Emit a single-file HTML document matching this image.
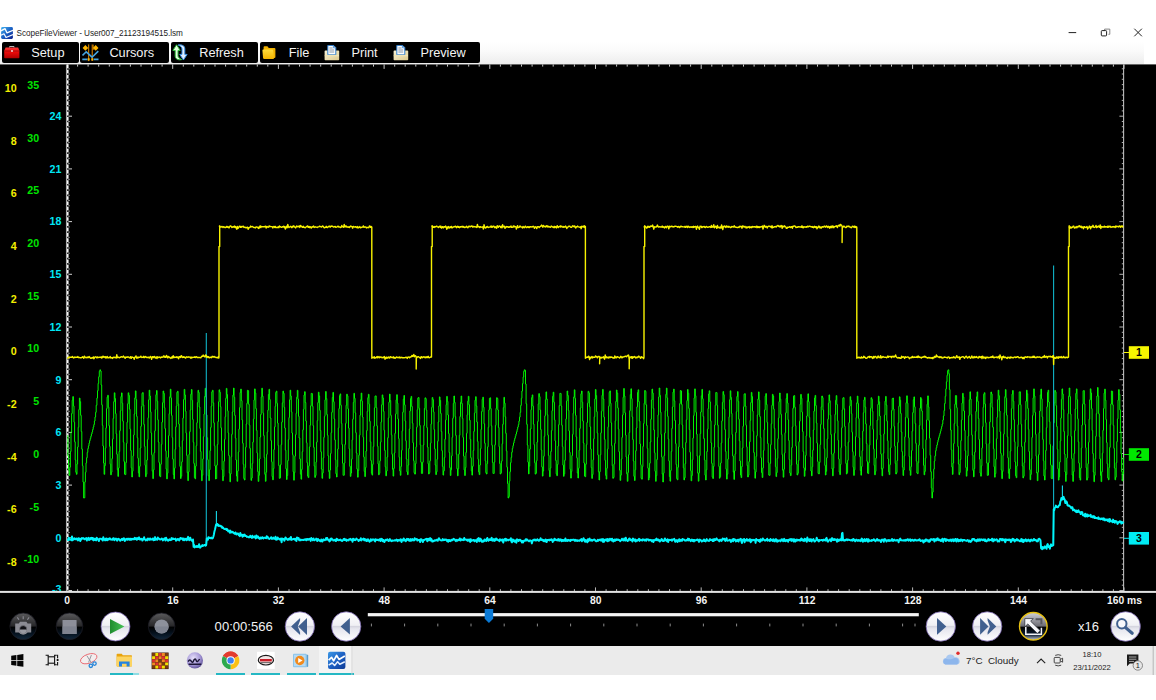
<!DOCTYPE html>
<html lang="en"><head><meta charset="utf-8"><title>ScopeFileViewer - User007_21123194515.lsm</title>
<style>
html,body{margin:0;padding:0;background:#fff;}
body{width:1156px;height:700px;overflow:hidden;font-family:"Liberation Sans",Arial,sans-serif;}
#root{position:relative;width:1156px;height:700px;overflow:hidden;background:#fff;}
#root *{box-sizing:border-box;}
.titlebar{position:absolute;left:0;top:26px;width:1156px;height:15px;background:#fff;}
.titlebar svg.app{position:absolute;left:1.1px;top:.9px;}
.title{position:absolute;left:16.6px;top:2.2px;font-size:8.2px;line-height:11px;color:#1c1c1c;white-space:nowrap;letter-spacing:-0.06px;}
.winctl{position:absolute;right:0;top:0;}
.toolbar{position:absolute;left:0;top:41px;width:1143.5px;height:23.4px;background:linear-gradient(#ffffff 0%,#fbfbfb 40%,#ededed 100%);}
.tb{position:absolute;top:.5px;height:21.6px;background:#000;border-radius:2px;color:#f4f4f4;font-size:12.75px;}
.tb span{position:absolute;top:3.1px;line-height:15px;white-space:nowrap;}
.tb svg{position:absolute;}
svg.plot{position:absolute;left:0;top:64px;}
.ctl{position:absolute;}
.timecode{position:absolute;left:214.6px;top:618.6px;font-size:13.1px;line-height:16px;color:#f2f2f2;white-space:nowrap;}
.zoomtxt{position:absolute;left:1078px;top:618.5px;font-size:13px;line-height:16px;color:#f2f2f2;white-space:nowrap;}
.taskbar{position:absolute;left:0;top:646px;width:1156px;height:29px;background:#ebebeb;}
.taskbar svg{position:absolute;}
.tk-ul{position:absolute;top:27.4px;height:1.6px;background:#25b8c4;}
.tk-act{position:absolute;left:319.4px;top:0;width:32.6px;height:29px;background:#f4f4f4;}
.wx{position:absolute;left:966px;top:8.6px;font-size:9.85px;line-height:12px;color:#222;white-space:nowrap;}
.clock{position:absolute;left:1066px;top:2.6px;width:52px;text-align:center;font-size:7.6px;line-height:12.9px;color:#222;white-space:nowrap;}

</style></head><body>
<div id="root">
<div class="titlebar"><svg class="app" width="12" height="12" viewBox="0 0 12 12"><defs><linearGradient id="ga" x1="0" y1="0" x2="1" y2="1"><stop offset="0" stop-color="#46b4f2"/><stop offset=".5" stop-color="#1c62c4"/><stop offset="1" stop-color="#0a1c8c"/></linearGradient></defs><rect x=".1" y=".1" width="11.800" height="11.800" rx="1.300" fill="url(#ga)"/><path d="M0 3.800 4.100 1.700 5.900 5.800 12 3.400" fill="none" stroke="#fff" stroke-width="1.300" stroke-linejoin="round"/><path d="M0 8.200 3 6.800 5 10.500 12 7.600" fill="none" stroke="#f4f8ff" stroke-width="1.250" stroke-linejoin="round"/></svg><span class="title">ScopeFileViewer - User007_21123194515.lsm</span><svg class="winctl" width="110" height="15" viewBox="1046 26 110 15"><path d="M1068.6 32.6h7.6" stroke="#222" stroke-width="1" fill="none"/><path d="M1103 30.6h1.6v-1.5h5.2v5.2h-1.4" stroke="#777" stroke-width=".9" fill="none"/><rect x="1101.3" y="30.6" width="5.3" height="5.3" rx=".8" fill="#fff" stroke="#222" stroke-width="1"/><path d="M1134.3 28.7l7.6 7.6m0-7.6l-7.6 7.6" stroke="#222" stroke-width="1" fill="none"/></svg></div>
<div class="toolbar">
<div class="tb" style="left:2px;width:76.6px"><svg style="left:2.4px;top:3.4px" width="16" height="14" viewBox="0 0 16 14"><defs><linearGradient id="gs" x1="0" y1="0" x2="0" y2="1"><stop offset="0" stop-color="#ff3a3a"/><stop offset=".45" stop-color="#e80a0a"/><stop offset="1" stop-color="#b00000"/></linearGradient></defs><path d="M5.6 2.6V1.5h4.4v1.1" fill="none" stroke="#b9b9b9" stroke-width="1"/><path d="M1.6 2.6h12.6l1.2 3.2v6.6q0 .8-.8.8H1q-.8 0-.8-.8V5.8z" fill="url(#gs)"/><path d="M.3 6h15.2" stroke="#8e0000" stroke-width=".7"/><circle cx="8" cy="6" r=".9" fill="#f6e9e9"/></svg><span style="left:29.2px">Setup</span></div>
<div class="tb" style="left:80.2px;width:88.6px"><svg style="left:1.6px;top:2.2px" width="17" height="18" viewBox="0 0 17 18"><path d="M6.7 .4V17.1" stroke="#e89200" stroke-width="1"/><path d="M10.3 .4V17.1" stroke="#a86200" stroke-width="1.4"/><path d="M11.3 .6V6" stroke="#f0a000" stroke-width=".7"/><path d="M.5 11.5 4.2 7.8l5.900 5.400L16.300 7.100" fill="none" stroke="#45a5e0" stroke-width="1.600"/><path d="M.3 15.400h5.200M11.700 15.400h4.800" stroke="#45a5e0" stroke-width="1.700"/><path d="M3.400 1 6.200 3.900 3.400 6.800.6 3.900zM13.700 1l2.800 2.900-2.800 2.900-2.800-2.900z" fill="#fdb400"/><rect x="5.700" y="14.300" width="2" height="2.200" fill="#fdb400"/><rect x="9.300" y="14.300" width="2" height="2.200" fill="#fdb400"/></svg><span style="left:29.2px">Cursors</span></div>
<div class="tb" style="left:170.6px;width:87.4px"><svg style="left:1.4px;top:2.2px" width="16" height="17" viewBox="0 0 16 17"><path d="M9.8 15.6C5.6 16.4 3.2 14.8 3.2 12V6.4H.9L4.6.8l3.6 5.6H6v5.4c0 1.6 1.4 2.6 3.8 3.8z" fill="#e4ffe0" stroke="#2fc03a" stroke-width="1"/><path d="M6.2 1C10 .4 12.8 1.8 12.8 4.8v5.6h2.3l-3.7 5.6-3.6-5.6H10V5c0-1.600-1.200-2.800-3.800-4z" fill="#e2f0ff" stroke="#3a92e6" stroke-width="1"/></svg><span style="left:28.6px">Refresh</span></div>
<div class="tb" style="left:259.6px;width:220.6px"><svg style="left:2.6px;top:3px" width="15" height="15" viewBox="0 0 15 15"><defs><linearGradient id="gf" x1="0" y1="0" x2="0" y2="1"><stop offset="0" stop-color="#ffdc3c"/><stop offset="1" stop-color="#f4b400"/></linearGradient></defs><path d="M1.600 2.200q0-1 1-1h2.800l1.400 1.800h5.600q1 0 1 1V12q0 1-1 1H2.600q-1 0-1-1z" fill="#f2b200"/><path d="M.4 5.600q-.1-1 .9-1h8.800q1 0 1.100 1l.8 7.400q.1 1-.9 1H2.200q-1 0-1.100-1z" fill="url(#gf)"/></svg><span style="left:29.2px">File</span><svg style="left:64.8px;top:3px" width="16" height="16" viewBox="0 0 16 16"><defs><linearGradient id="gp64" x1="0" y1="0" x2="1" y2="1"><stop offset="0" stop-color="#fbf3d4"/><stop offset="1" stop-color="#dcc98e"/></linearGradient></defs><path d="M.6 6.200q0-.8.800-.8h13q.8 0 .8.800V14.400q0 .8-.8.800h-13q-.8 0-.8-.8z" fill="url(#gp64)"/><path d="M3.800 .4h5.800l2.200 2.200v7.200h-8z" fill="#fbfcfe" stroke="#2f7fd0" stroke-width="1"/><path d="M5.400 3h3.200M5.400 5h4.800M5.400 7h4.800" stroke="#8a98a8" stroke-width="1"/><path d="M9.400 .6v2.200h2.200" fill="none" stroke="#2f7fd0" stroke-width=".8"/><path d="M.8 10.600h14.200" stroke="#efe3b6" stroke-width="1.400"/></svg><span style="left:91.8px">Print</span><svg style="left:133.2px;top:3px" width="16" height="16" viewBox="0 0 16 16"><defs><linearGradient id="gp133" x1="0" y1="0" x2="1" y2="1"><stop offset="0" stop-color="#fbf3d4"/><stop offset="1" stop-color="#dcc98e"/></linearGradient></defs><path d="M.6 6.200q0-.8.800-.8h13q.8 0 .8.800V14.400q0 .8-.8.800h-13q-.8 0-.8-.8z" fill="url(#gp133)"/><path d="M3.800 .4h5.800l2.200 2.200v7.200h-8z" fill="#fbfcfe" stroke="#2f7fd0" stroke-width="1"/><path d="M5.400 3h3.200M5.400 5h4.800M5.400 7h4.800" stroke="#8a98a8" stroke-width="1"/><path d="M9.400 .6v2.200h2.200" fill="none" stroke="#2f7fd0" stroke-width=".8"/><path d="M.8 10.600h14.200" stroke="#efe3b6" stroke-width="1.400"/></svg><span style="left:160.8px">Preview</span></div>
</div>
<svg class="plot" width="1156" height="582" viewBox="0 64 1156 582">
<rect x="0" y="64.4" width="1156" height="582" fill="#000"/>
<path d="M67 64.4v4.5M77.6 64.4v2.2M88.1 64.4v2.2M98.7 64.4v2.2M109.3 64.4v2.2M119.8 64.4v2.2M130.4 64.4v2.2M141 64.4v2.2M151.6 64.4v2.2M162.1 64.4v2.2M172.7 64.4v4.5M183.3 64.4v2.2M193.8 64.4v2.2M204.4 64.4v2.2M215 64.4v2.2M225.6 64.4v2.2M236.1 64.4v2.2M246.7 64.4v2.2M257.3 64.4v2.2M267.8 64.4v2.2M278.4 64.4v4.5M289 64.4v2.2M299.5 64.4v2.2M310.1 64.4v2.2M320.7 64.4v2.2M331.2 64.4v2.2M341.8 64.4v2.2M352.4 64.4v2.2M363 64.4v2.2M373.5 64.4v2.2M384.1 64.4v4.5M394.7 64.4v2.2M405.2 64.4v2.2M415.8 64.4v2.2M426.4 64.4v2.2M436.9 64.4v2.2M447.5 64.4v2.2M458.1 64.4v2.2M468.7 64.4v2.2M479.2 64.4v2.2M489.8 64.4v4.5M500.4 64.4v2.2M510.9 64.4v2.2M521.5 64.4v2.2M532.1 64.4v2.2M542.7 64.4v2.2M553.2 64.4v2.2M563.8 64.4v2.2M574.4 64.4v2.2M584.9 64.4v2.2M595.5 64.4v4.5M606.1 64.4v2.2M616.6 64.4v2.2M627.2 64.4v2.2M637.8 64.4v2.2M648.4 64.4v2.2M658.9 64.4v2.2M669.5 64.4v2.2M680.1 64.4v2.2M690.6 64.4v2.2M701.2 64.4v4.5M711.8 64.4v2.2M722.3 64.4v2.2M732.9 64.4v2.2M743.5 64.4v2.2M754.1 64.4v2.2M764.6 64.4v2.2M775.2 64.4v2.2M785.8 64.4v2.2M796.3 64.4v2.2M806.9 64.4v4.5M817.5 64.4v2.2M828 64.4v2.2M838.6 64.4v2.2M849.2 64.4v2.2M859.8 64.4v2.2M870.3 64.4v2.2M880.9 64.4v2.2M891.5 64.4v2.2M902 64.4v2.2M912.6 64.4v4.5M923.2 64.4v2.2M933.7 64.4v2.2M944.3 64.4v2.2M954.9 64.4v2.2M965.5 64.4v2.2M976 64.4v2.2M986.6 64.4v2.2M997.2 64.4v2.2M1007.7 64.4v2.2M1018.3 64.4v4.5M1028.9 64.4v2.2M1039.4 64.4v2.2M1050 64.4v2.2M1060.6 64.4v2.2M1071.2 64.4v2.2M1081.7 64.4v2.2M1092.3 64.4v2.2M1102.9 64.4v2.2M1113.4 64.4v2.2M1124 64.4v4.5" stroke="#c8c8c8" stroke-width="1" fill="none"/>
<path d="M67 591v-3.6M77.6 591v-1.8M88.1 591v-1.8M98.7 591v-1.8M109.3 591v-1.8M119.8 591v-1.8M130.4 591v-1.8M141 591v-1.8M151.6 591v-1.8M162.1 591v-1.8M172.7 591v-3.6M183.3 591v-1.8M193.8 591v-1.8M204.4 591v-1.8M215 591v-1.8M225.6 591v-1.8M236.1 591v-1.8M246.7 591v-1.8M257.3 591v-1.8M267.8 591v-1.8M278.4 591v-3.6M289 591v-1.8M299.5 591v-1.8M310.1 591v-1.8M320.7 591v-1.8M331.2 591v-1.8M341.8 591v-1.8M352.4 591v-1.8M363 591v-1.8M373.5 591v-1.8M384.1 591v-3.6M394.7 591v-1.8M405.2 591v-1.8M415.8 591v-1.8M426.4 591v-1.8M436.9 591v-1.8M447.5 591v-1.8M458.1 591v-1.8M468.7 591v-1.8M479.2 591v-1.8M489.8 591v-3.6M500.4 591v-1.8M510.9 591v-1.8M521.5 591v-1.8M532.1 591v-1.8M542.7 591v-1.8M553.2 591v-1.8M563.8 591v-1.8M574.4 591v-1.8M584.9 591v-1.8M595.5 591v-3.6M606.1 591v-1.8M616.6 591v-1.8M627.2 591v-1.8M637.8 591v-1.8M648.4 591v-1.8M658.9 591v-1.8M669.5 591v-1.8M680.1 591v-1.8M690.6 591v-1.8M701.2 591v-3.6M711.8 591v-1.8M722.3 591v-1.8M732.9 591v-1.8M743.5 591v-1.8M754.1 591v-1.8M764.6 591v-1.8M775.2 591v-1.8M785.8 591v-1.8M796.3 591v-1.8M806.9 591v-3.6M817.5 591v-1.8M828 591v-1.8M838.6 591v-1.8M849.2 591v-1.8M859.8 591v-1.8M870.3 591v-1.8M880.9 591v-1.8M891.5 591v-1.8M902 591v-1.8M912.6 591v-3.6M923.2 591v-1.8M933.7 591v-1.8M944.3 591v-1.8M954.9 591v-1.8M965.5 591v-1.8M976 591v-1.8M986.6 591v-1.8M997.2 591v-1.8M1007.7 591v-1.8M1018.3 591v-3.6M1028.9 591v-1.8M1039.4 591v-1.8M1050 591v-1.8M1060.6 591v-1.8M1071.2 591v-1.8M1081.7 591v-1.8M1092.3 591v-1.8M1102.9 591v-1.8M1113.4 591v-1.8M1124 591v-3.6" stroke="#b4b4b4" stroke-width="1" fill="none"/>
<path d="M1123.4 68.8h-1.6M1123.4 74h-1.6M1123.4 79.3h-1.6M1123.4 84.6h-1.6M1123.4 89.8h-1.6M1123.4 95.1h-1.6M1123.4 100.4h-1.6M1123.4 105.7h-1.6M1123.4 110.9h-1.6M1123.4 116.2h-4M1123.4 121.5h-1.6M1123.4 126.7h-1.6M1123.4 132h-1.6M1123.4 137.3h-1.6M1123.4 142.5h-1.6M1123.4 147.8h-1.6M1123.4 153.1h-1.6M1123.4 158.4h-1.6M1123.4 163.6h-1.6M1123.4 168.9h-4M1123.4 174.2h-1.6M1123.4 179.4h-1.6M1123.4 184.7h-1.6M1123.4 190h-1.6M1123.4 195.3h-1.6M1123.4 200.5h-1.6M1123.4 205.8h-1.6M1123.4 211.1h-1.6M1123.4 216.3h-1.6M1123.4 221.6h-4M1123.4 226.9h-1.6M1123.4 232.1h-1.6M1123.4 237.4h-1.6M1123.4 242.7h-1.6M1123.4 248h-1.6M1123.4 253.2h-1.6M1123.4 258.5h-1.6M1123.4 263.8h-1.6M1123.4 269h-1.6M1123.4 274.3h-4M1123.4 279.6h-1.6M1123.4 284.8h-1.6M1123.4 290.1h-1.6M1123.4 295.4h-1.6M1123.4 300.7h-1.6M1123.4 305.9h-1.6M1123.4 311.2h-1.6M1123.4 316.5h-1.6M1123.4 321.7h-1.6M1123.4 327h-4M1123.4 332.3h-1.6M1123.4 337.5h-1.6M1123.4 342.8h-1.6M1123.4 348.1h-1.6M1123.4 353.3h-1.6M1123.4 358.6h-1.6M1123.4 363.9h-1.6M1123.4 369.2h-1.6M1123.4 374.4h-1.6M1123.4 379.7h-4M1123.4 385h-1.6M1123.4 390.2h-1.6M1123.4 395.5h-1.6M1123.4 400.8h-1.6M1123.4 406h-1.6M1123.4 411.3h-1.6M1123.4 416.6h-1.6M1123.4 421.9h-1.6M1123.4 427.1h-1.6M1123.4 432.4h-4M1123.4 437.7h-1.6M1123.4 442.9h-1.6M1123.4 448.2h-1.6M1123.4 453.5h-1.6M1123.4 458.7h-1.6M1123.4 464h-1.6M1123.4 469.3h-1.6M1123.4 474.6h-1.6M1123.4 479.8h-1.6M1123.4 485.1h-4M1123.4 490.4h-1.6M1123.4 495.6h-1.6M1123.4 500.9h-1.6M1123.4 506.2h-1.6M1123.4 511.4h-1.6M1123.4 516.7h-1.6M1123.4 522h-1.6M1123.4 527.3h-1.6M1123.4 532.5h-1.6M1123.4 537.8h-4M1123.4 543.1h-1.6M1123.4 548.3h-1.6M1123.4 553.6h-1.6M1123.4 558.9h-1.6M1123.4 564.1h-1.6M1123.4 569.4h-1.6M1123.4 574.7h-1.6M1123.4 580h-1.6M1123.4 585.2h-1.6M1123.4 590.5h-4" stroke="#b0b0b0" stroke-width="1" fill="none"/>
<path d="M1123.6 64.4V591" stroke="#bdbdbd" stroke-width="1.1" fill="none"/>
<path d="M66.6 64.4V591" stroke="#a8a8a8" stroke-width="1.3" fill="none"/>
<path d="M67.8 64.4V591" stroke="#ffffff" stroke-width="1.5" stroke-dasharray="3.6 1.67" fill="none"/>
<path d="M68.4 68.8h1.2M68.4 74h1.2M68.4 79.3h1.2M68.4 84.6h1.2M68.4 89.8h1.2M68.4 95.1h1.2M68.4 100.4h1.2M68.4 105.7h1.2M68.4 110.9h1.2M68.4 116.2h3.6M68.4 121.5h1.2M68.4 126.7h1.2M68.4 132h1.2M68.4 137.3h1.2M68.4 142.5h1.2M68.4 147.8h1.2M68.4 153.1h1.2M68.4 158.4h1.2M68.4 163.6h1.2M68.4 168.9h3.6M68.4 174.2h1.2M68.4 179.4h1.2M68.4 184.7h1.2M68.4 190h1.2M68.4 195.3h1.2M68.4 200.5h1.2M68.4 205.8h1.2M68.4 211.1h1.2M68.4 216.3h1.2M68.4 221.6h3.6M68.4 226.9h1.2M68.4 232.1h1.2M68.4 237.4h1.2M68.4 242.7h1.2M68.4 248h1.2M68.4 253.2h1.2M68.4 258.5h1.2M68.4 263.8h1.2M68.4 269h1.2M68.4 274.3h3.6M68.4 279.6h1.2M68.4 284.8h1.2M68.4 290.1h1.2M68.4 295.4h1.2M68.4 300.7h1.2M68.4 305.9h1.2M68.4 311.2h1.2M68.4 316.5h1.2M68.4 321.7h1.2M68.4 327h3.6M68.4 332.3h1.2M68.4 337.5h1.2M68.4 342.8h1.2M68.4 348.1h1.2M68.4 353.3h1.2M68.4 358.6h1.2M68.4 363.9h1.2M68.4 369.2h1.2M68.4 374.4h1.2M68.4 379.7h3.6M68.4 385h1.2M68.4 390.2h1.2M68.4 395.5h1.2M68.4 400.8h1.2M68.4 406h1.2M68.4 411.3h1.2M68.4 416.6h1.2M68.4 421.9h1.2M68.4 427.1h1.2M68.4 432.4h3.6M68.4 437.7h1.2M68.4 442.9h1.2M68.4 448.2h1.2M68.4 453.5h1.2M68.4 458.7h1.2M68.4 464h1.2M68.4 469.3h1.2M68.4 474.6h1.2M68.4 479.8h1.2M68.4 485.1h3.6M68.4 490.4h1.2M68.4 495.6h1.2M68.4 500.9h1.2M68.4 506.2h1.2M68.4 511.4h1.2M68.4 516.7h1.2M68.4 522h1.2M68.4 527.3h1.2M68.4 532.5h1.2M68.4 537.8h3.6M68.4 543.1h1.2M68.4 548.3h1.2M68.4 553.6h1.2M68.4 558.9h1.2M68.4 564.1h1.2M68.4 569.4h1.2M68.4 574.7h1.2M68.4 580h1.2M68.4 585.2h1.2M68.4 590.5h3.6" stroke="#d0d0d0" stroke-width="1" fill="none"/>
<polyline points="67.6,435.4 67.9,435.4 67.9,456 68.6,456 68.6,470.1 69.2,470.1 69.2,475.5 69.8,475.5 69.8,467.2 70.4,467.2 70.4,451.5 71,451.5 71,432.1 71.6,432.1 71.6,413.5 72.2,413.5 72.2,400.3 72.8,400.3 72.8,396.6 73.4,396.6 73.4,405.9 74,405.9 74,422.2 74.6,422.2 74.6,441.8 75.2,441.8 75.2,459.9 75.8,459.9 75.8,472.3 76.4,472.3 76.4,474.3 77,474.3 77,464 77.6,464 77.6,447 78.2,447 78.2,427.3 78.8,427.3 78.8,409.6 79.4,409.6 79.4,398.1 80,398.1 80,401.7 80.6,401.7 80.6,415.3 81.2,415.3 81.2,431.5 81.8,431.5 81.8,449.1 82.4,449.1 82.4,465.7 83,465.7 83,482.1 83.6,482.1 83.6,498 84.2,498 84.2,497.8 84.8,497.8 84.8,481.9 85.4,481.9 85.4,472.3 86,472.3 86,462.9 86.6,462.9 86.6,457.7 87.2,457.7 87.2,452.4 87.8,452.4 87.8,448.6 88.4,448.6 88.4,445.9 89,445.9 89,443.1 89.6,443.1 89.6,440.5 90.2,440.5 90.2,438.4 90.8,438.4 90.8,436.2 91.4,436.2 91.4,434 92,434 92,431.9 92.6,431.9 92.6,429.5 93.2,429.5 93.2,427 93.8,427 93.8,424.6 94.4,424.6 94.4,421 95,421 95,417 95.6,417 95.6,412.3 96.2,412.3 96.2,405.3 96.9,405.3 96.9,398.1 97.5,398.1 97.5,390.7 98.1,390.7 98.1,383.4 98.7,383.4 98.7,376.8 99.3,376.8 99.3,371.3 99.9,371.3 99.9,369.8 100.5,369.8 100.5,371 101.1,371 101.1,385 101.7,385 101.7,404.8 102.3,404.8 102.3,425.4 102.9,425.4 102.9,446 103.5,446 103.5,463 104.1,463 104.1,474.3 104.7,474.3 104.7,465.6 105.3,465.6 105.3,448.1 105.9,448.1 105.9,427.9 106.5,427.9 106.5,408.6 107.1,408.6 107.1,397.2 107.7,397.2 107.7,395.3 108.3,395.3 108.3,407.2 108.9,407.2 108.9,425.7 109.5,425.7 109.5,446.4 110.1,446.4 110.1,464.2 110.7,464.2 110.7,474.8 111.3,474.8 111.3,472.1 111.9,472.1 111.9,458.6 112.5,458.6 112.5,439.1 113.1,439.1 113.1,418.4 113.7,418.4 113.7,401.7 114.3,401.7 114.3,392.8 114.9,392.8 114.9,398.5 115.5,398.5 115.5,413.6 116.1,413.6 116.1,433.8 116.7,433.8 116.7,454.2 117.3,454.2 117.3,469.8 117.9,469.8 117.9,476.4 118.5,476.4 118.5,468 119.1,468 119.1,451.5 119.7,451.5 119.7,430.7 120.3,430.7 120.3,410.8 120.9,410.8 120.9,396.6 121.5,396.6 121.5,392.9 122.1,392.9 122.1,403.2 122.7,403.2 122.7,421.1 123.3,421.1 123.3,442.2 123.9,442.2 123.9,461.4 124.5,461.4 124.5,474.1 125.1,474.1 125.1,474.6 125.8,474.6 125.8,462.5 126.4,462.5 126.4,443.5 127,443.5 127,422.2 127.6,422.2 127.6,403.8 128.2,403.8 128.2,392.8 128.8,392.8 128.8,395.4 129.4,395.4 129.4,409.2 130,409.2 130,429.2 130.6,429.2 130.6,450.5 131.2,450.5 131.2,467.8 131.8,467.8 131.8,477 132.4,477 132.4,471.2 133,471.2 133,455.8 133.6,455.8 133.6,435 134.2,435 134.2,414 134.8,414 134.8,397.9 135.4,397.9 135.4,390.9 136,390.9 136,399.5 136.6,399.5 136.6,416.4 137.2,416.4 137.2,437.7 137.8,437.7 137.8,458.2 138.4,458.2 138.4,472.9 139,472.9 139,476.8 139.6,476.8 139.6,466.3 140.2,466.3 140.2,448 140.8,448 140.8,426.3 141.4,426.3 141.4,406.5 142,406.5 142,393.3 142.6,393.3 142.6,392.6 143.2,392.6 143.2,405 143.8,405 143.8,424.4 144.4,424.4 144.4,446.3 145,446.3 145,465.3 145.6,465.3 145.6,476.7 146.2,476.7 146.2,474.2 146.8,474.2 146.8,460 147.4,460 147.4,439.6 148,439.6 148,417.7 148.6,417.7 148.6,399.8 149.2,399.8 149.2,390.2 149.8,390.2 149.8,396 150.4,396 150.4,411.8 151,411.8 151,433.1 151.6,433.1 151.6,454.7 152.2,454.7 152.2,471.2 152.8,471.2 152.8,478.6 153.4,478.6 153.4,469.9 154,469.9 154,452.6 154.7,452.6 154.7,430.8 155.3,430.8 155.3,409.7 155.9,409.7 155.9,394.7 156.5,394.7 156.5,390.5 157.1,390.5 157.1,401.2 157.7,401.2 157.7,419.8 158.3,419.8 158.3,442 158.9,442 158.9,462.4 159.5,462.4 159.5,475.8 160.1,475.8 160.1,476.7 160.7,476.7 160.7,464.2 161.3,464.2 161.3,444.4 161.9,444.4 161.9,422.1 162.5,422.1 162.5,402.7 163.1,402.7 163.1,391 163.7,391 163.7,393.4 164.3,393.4 164.3,407.7 164.9,407.7 164.9,428.6 165.5,428.6 165.5,450.8 166.1,450.8 166.1,469.1 166.7,469.1 166.7,478.9 167.3,478.9 167.3,473.2 167.9,473.2 167.9,457.3 168.5,457.3 168.5,435.7 169.1,435.7 169.1,413.7 169.7,413.7 169.7,396.8 170.3,396.8 170.3,389.2 170.9,389.2 170.9,397.9 171.5,397.9 171.5,415.4 172.1,415.4 172.1,437.6 172.7,437.6 172.7,459.1 173.3,459.1 173.3,474.5 173.9,474.5 173.9,478.9 174.5,478.9 174.5,468.2 175.1,468.2 175.1,449.3 175.7,449.3 175.7,426.8 176.3,426.8 176.3,406.1 176.9,406.1 176.9,392.3 177.5,392.3 177.5,391.3 178.1,391.3 178.1,403.9 178.7,403.9 178.7,424 179.3,424 179.3,446.7 179.9,446.7 179.9,466.4 180.5,466.4 180.5,478.5 181.1,478.5 181.1,476.2 181.7,476.2 181.7,461.8 182.3,461.8 182.3,440.7 182.9,440.7 182.9,418.1 183.5,418.1 183.5,399.5 184.2,399.5 184.2,389.4 184.8,389.4 184.8,395 185.4,395 185.4,411.2 186,411.2 186,433.1 186.6,433.1 186.6,455.4 187.2,455.4 187.2,472.7 187.8,472.7 187.8,480.6 188.4,480.6 188.4,471.9 189,471.9 189,454.2 189.6,454.2 189.6,431.7 190.2,431.7 190.2,409.9 190.8,409.9 190.8,394.2 191.4,394.2 191.4,389.5 192,389.5 192,400.3 192.6,400.3 192.6,419.4 193.2,419.4 193.2,442.3 193.8,442.3 193.8,463.4 194.4,463.4 194.4,477.5 195,477.5 195,478.8 195.6,478.8 195.6,466.1 196.2,466.1 196.2,445.7 196.8,445.7 196.8,422.7 197.4,422.7 197.4,402.6 198,402.6 198,390.3 198.6,390.3 198.6,392.5 199.2,392.5 199.2,407 199.8,407 199.8,428.4 200.4,428.4 200.4,451.4 201,451.4 201,470.3 201.6,470.3 201.6,480.7 202.2,480.7 202.2,475.2 202.8,475.2 202.8,458.9 203.4,458.9 203.4,436.7 204,436.7 204,414 204.6,414 204.6,396.5 205.2,396.5 205.2,388.3 205.8,388.3 205.8,397.1 206.4,397.1 206.4,414.9 207,414.9 207,437.7 207.6,437.7 207.6,459.7 208.2,459.7 208.2,475.7 208.8,475.7 208.8,480.6 209.4,480.6 209.4,469.8 210,469.8 210,450.5 210.6,450.5 210.6,427.4 211.2,427.4 211.2,406.1 211.8,406.1 211.8,391.8 212.4,391.8 212.4,390.3 213.1,390.3 213.1,402.8 213.7,402.8 213.7,422.8 214.3,422.8 214.3,445.7 214.9,445.7 214.9,466 215.5,466 215.5,479 216.1,479 216.1,478.5 216.7,478.5 216.7,465.1 217.3,465.1 217.3,444.5 217.9,444.5 217.9,421.5 218.5,421.5 218.5,401.8 219.1,401.8 219.1,389.8 219.7,389.8 219.7,392.2 220.3,392.2 220.3,406.6 220.9,406.6 220.9,427.8 221.5,427.8 221.5,450.7 222.1,450.7 222.1,469.8 222.7,469.8 222.7,480.7 223.3,480.7 223.3,476.5 223.9,476.5 223.9,461.1 224.5,461.1 224.5,439.4 225.1,439.4 225.1,416.7 225.7,416.7 225.7,398.3 226.3,398.3 226.3,388.4 226.9,388.4 226.9,394.5 227.5,394.5 227.5,410.8 228.1,410.8 228.1,432.9 228.7,432.9 228.7,455.5 229.3,455.5 229.3,473.1 229.9,473.1 229.9,481.8 230.5,481.8 230.5,473.9 231.1,473.9 231.1,456.7 231.7,456.7 231.7,434.3 232.3,434.3 232.3,412 232.9,412 232.9,395.1 233.5,395.1 233.5,388.1 234.1,388.1 234.1,397.3 234.7,397.3 234.7,415.4 235.3,415.4 235.3,438.1 235.9,438.1 235.9,460 236.5,460 236.5,476 237.1,476 237.1,481.3 237.7,481.3 237.7,470.9 238.3,470.9 238.3,452.1 238.9,452.1 238.9,429.1 239.5,429.1 239.5,407.6 240.1,407.6 240.1,392.5 240.7,392.5 240.7,389.1 241.3,389.1 241.3,400.6 242,400.6 242,420.1 242.6,420.1 242.6,443.2 243.2,443.2 243.2,464.3 243.8,464.3 243.8,478.5 244.4,478.5 244.4,480 245,480 245,467.4 245.6,467.4 245.6,447.2 246.2,447.2 246.2,424 246.8,424 246.8,403.4 247.4,403.4 247.4,390.3 248,390.3 248,390.7 248.6,390.7 248.6,404.3 249.2,404.3 249.2,425.1 249.8,425.1 249.8,448.3 250.4,448.3 250.4,468.3 251,468.3 251,480.4 251.6,480.4 251.6,478 252.2,478 252.2,463.4 252.8,463.4 252.8,442.1 253.4,442.1 253.4,419.1 254,419.1 254,399.9 254.6,399.9 254.6,388.9 255.2,388.9 255.2,393.1 255.8,393.1 255.8,408.6 256.4,408.6 256.4,430.3 257,430.3 257,453.1 257.6,453.1 257.6,471.5 258.2,471.5 258.2,481.4 258.8,481.4 258.8,475.3 259.4,475.3 259.4,459 260,459 260,437 260.6,437 260.6,414.5 261.2,414.5 261.2,396.9 261.8,396.9 261.8,388.2 262.4,388.2 262.4,396.1 263,396.1 263,413.2 263.6,413.2 263.6,435.5 264.2,435.5 264.2,457.6 264.8,457.6 264.8,474.3 265.4,474.3 265.4,481.3 266,481.3 266,472.2 266.6,472.2 266.6,454.3 267.2,454.3 267.2,431.9 267.8,431.9 267.8,410.2 268.4,410.2 268.4,394.5 269,394.5 269,389.3 269.6,389.3 269.6,399.5 270.2,399.5 270.2,418 270.9,418 270.9,440.6 271.5,440.6 271.5,461.7 272.1,461.7 272.1,476.5 272.7,476.5 272.7,479.8 273.3,479.8 273.3,468.6 273.9,468.6 273.9,449.5 274.5,449.5 274.5,426.9 275.1,426.9 275.1,406.3 275.7,406.3 275.7,392.5 276.3,392.5 276.3,391.1 276.9,391.1 276.9,403.3 277.5,403.3 277.5,423 278.1,423 278.1,445.5 278.7,445.5 278.7,465.5 279.3,465.5 279.3,478.3 279.9,478.3 279.9,477.9 280.5,477.9 280.5,464.7 281.1,464.7 281.1,444.6 281.7,444.6 281.7,422.1 282.3,422.1 282.3,402.8 282.9,402.8 282.9,391.1 283.5,391.1 283.5,393.3 284.1,393.3 284.1,407.4 284.7,407.4 284.7,428 285.3,428 285.3,450.2 285.9,450.2 285.9,468.8 286.5,468.8 286.5,479.5 287.1,479.5 287.1,475.5 287.7,475.5 287.7,460.6 288.3,460.6 288.3,439.6 288.9,439.6 288.9,417.6 289.5,417.6 289.5,399.8 290.1,399.8 290.1,390.2 290.7,390.2 290.7,396 291.3,396 291.3,411.8 291.9,411.8 291.9,433 292.5,433 292.5,454.7 293.1,454.7 293.1,471.7 293.7,471.7 293.7,480.2 294.3,480.2 294.3,472.6 294.9,472.6 294.9,456.1 295.5,456.1 295.5,434.7 296.1,434.7 296.1,413.3 296.7,413.3 296.7,397.2 297.3,397.2 297.3,390.3 297.9,390.3 297.9,399.1 298.5,399.1 298.5,416.3 299.1,416.3 299.1,438 299.8,438 299.8,458.9 300.4,458.9 300.4,474.2 301,474.2 301,479.2 301.6,479.2 301.6,469.4 302.2,469.4 302.2,451.6 302.8,451.6 302.8,429.8 303.4,429.8 303.4,409.4 304,409.4 304,395 304.6,395 304.6,391.7 305.2,391.7 305.2,402.5 305.8,402.5 305.8,421 306.4,421 306.4,442.7 307,442.7 307,462.7 307.6,462.7 307.6,476 308.2,476 308.2,477.6 308.8,477.6 308.8,465.8 309.4,465.8 309.4,446.9 310,446.9 310,425.1 310.6,425.1 310.6,405.8 311.2,405.8 311.2,393.4 311.8,393.4 311.8,393.6 312.4,393.6 312.4,406.3 313,406.3 313,425.7 313.6,425.7 313.6,447.4 314.2,447.4 314.2,466.1 314.8,466.1 314.8,477.4 315.4,477.4 315.4,475.5 316,475.5 316,461.9 316.6,461.9 316.6,442.1 317.2,442.1 317.2,420.6 317.8,420.6 317.8,402.6 318.4,402.6 318.4,392.2 319,392.2 319,395.9 319.6,395.9 319.6,410.3 320.2,410.3 320.2,430.5 320.8,430.5 320.8,451.8 321.4,451.8 321.4,469 322,469 322,478.3 322.6,478.3 322.6,472.9 323.2,472.9 323.2,457.8 323.8,457.8 323.8,437.3 324.4,437.3 324.4,416.3 325,416.3 325,399.8 325.6,399.8 325.6,391.5 326.2,391.5 326.2,398.6 326.8,398.6 326.8,414.5 327.4,414.5 327.4,435.2 328,435.2 328,455.9 328.7,455.9 328.7,471.6 329.3,471.6 329.3,478.4 329.9,478.4 329.9,470 330.5,470 330.5,453.5 331.1,453.5 331.1,432.6 331.7,432.6 331.7,412.3 332.3,412.3 332.3,397.5 332.9,397.5 332.9,392.4 333.5,392.4 333.5,401.7 334.1,401.7 334.1,418.9 334.7,418.9 334.7,439.9 335.3,439.9 335.3,459.7 335.9,459.7 335.9,473.7 336.5,473.7 336.5,477 337.1,477 337.1,466.7 337.7,466.7 337.7,449 338.3,449 338.3,427.9 338.9,427.9 338.9,408.6 339.5,408.6 339.5,395.6 340.1,395.6 340.1,393.9 340.7,393.9 340.7,405.2 341.3,405.2 341.3,423.4 341.9,423.4 341.9,444.5 342.5,444.5 342.5,463.2 343.1,463.2 343.1,475.3 343.7,475.3 343.7,475.2 344.3,475.2 344.3,463.1 344.9,463.1 344.9,444.4 345.5,444.4 345.5,423.4 346.1,423.4 346.1,405.3 346.7,405.3 346.7,394.2 347.3,394.2 347.3,395.9 347.9,395.9 347.9,408.9 348.5,408.9 348.5,428 349.1,428 349.1,448.8 349.7,448.8 349.7,466.3 350.3,466.3 350.3,476.4 350.9,476.4 350.9,473 351.5,473 351.5,459.2 352.1,459.2 352.1,439.8 352.7,439.8 352.7,419.2 353.3,419.2 353.3,402.4 353.9,402.4 353.9,393.3 354.5,393.3 354.5,398.3 355.1,398.3 355.1,412.9 355.7,412.9 355.7,432.7 356.3,432.7 356.3,453 356.9,453 356.9,469.1 357.6,469.1 357.6,477.2 358.2,477.2 358.2,470.5 358.8,470.5 358.8,455.2 359.4,455.2 359.4,435.2 360,435.2 360,415.1 360.6,415.1 360.6,399.8 361.2,399.8 361.2,393.1 361.8,393.1 361.8,401.1 362.4,401.1 362.4,417 363,417 363,437.3 363.6,437.3 363.6,456.9 364.2,456.9 364.2,471.4 364.8,471.4 364.8,476.6 365.4,476.6 365.4,467.6 366,467.6 366,451 366.6,451 366.6,430.6 367.2,430.6 367.2,411.4 367.8,411.4 367.8,397.7 368.4,397.7 368.4,394.3 369,394.3 369,404.2 369.6,404.2 369.6,421.3 370.2,421.3 370.2,441.8 370.8,441.8 370.8,460.6 371.4,460.6 371.4,473.3 372,473.3 372,475.1 372.6,475.1 372.6,464.3 373.2,464.3 373.2,446.6 373.8,446.6 373.8,426.2 374.4,426.2 374.4,407.9 375,407.9 375,396.1 375.6,396.1 375.6,395.9 376.2,395.9 376.2,407.6 376.8,407.6 376.8,425.8 377.4,425.8 377.4,446.2 378,446.2 378,463.9 378.6,463.9 378.6,474.8 379.2,474.8 379.2,473.3 379.8,473.3 379.8,460.8 380.4,460.8 380.4,442.2 381,442.2 381,421.9 381.6,421.9 381.6,404.8 382.2,404.8 382.2,394.9 382.8,394.9 382.8,398 383.4,398 383.4,411.3 384,411.3 384,430.3 384.6,430.3 384.6,450.4 385.2,450.4 385.2,466.8 385.8,466.8 385.8,475.8 386.5,475.8 386.5,471 387.1,471 387.1,457 387.7,457 387.7,437.7 388.3,437.7 388.3,417.9 388.9,417.9 388.9,402.2 389.5,402.2 389.5,394.1 390.1,394.1 390.1,400.5 390.7,400.5 390.7,415.3 391.3,415.3 391.3,434.8 391.9,434.8 391.9,454.3 392.5,454.3 392.5,469.3 393.1,469.3 393.1,476.1 393.7,476.1 393.7,468.4 394.3,468.4 394.3,453 394.9,453 394.9,433.3 395.5,433.3 395.5,414.1 396.1,414.1 396.1,399.9 396.7,399.9 396.7,394.7 397.3,394.7 397.3,403.2 397.9,403.2 397.9,419 398.5,419 398.5,438.6 399.1,438.6 399.1,457.3 399.7,457.3 399.7,470.9 400.3,470.9 400.3,475.3 400.9,475.3 400.9,466.4 401.5,466.4 401.5,450.3 402.1,450.3 402.1,430.8 402.7,430.8 402.7,412.2 403.3,412.2 403.3,399.1 403.9,399.1 403.9,395.5 404.5,395.5 404.5,404.8 405.1,404.8 405.1,421.1 405.7,421.1 405.7,440.7 406.3,440.7 406.3,459 406.9,459 406.9,471.8 407.5,471.8 407.5,474.7 408.1,474.7 408.1,465.1 408.7,465.1 408.7,448.6 409.3,448.6 409.3,429 409.9,429 409.9,410.9 410.5,410.9 410.5,398.6 411.1,398.6 411.1,396.4 411.7,396.4 411.7,406.5 412.3,406.5 412.3,423.2 412.9,423.2 412.9,442.8 413.5,442.8 413.5,460.7 414.1,460.7 414.1,472.7 414.7,472.7 414.7,474.1 415.4,474.1 415.4,463.7 416,463.7 416,446.8 416.6,446.8 416.6,427.2 417.2,427.2 417.2,409.7 417.8,409.7 417.8,398.1 418.4,398.1 418.4,397.5 419,397.5 419,408.3 419.6,408.3 419.6,425.4 420.2,425.4 420.2,444.9 420.8,444.9 420.8,462.2 421.4,462.2 421.4,473.4 422,473.4 422,473.4 422.6,473.4 422.6,462.2 423.2,462.2 423.2,445 423.8,445 423.8,425.5 424.4,425.5 424.4,408.5 425,408.5 425,397.8 425.6,397.8 425.6,398.6 426.2,398.6 426.2,410.1 426.8,410.1 426.8,427.6 427.4,427.6 427.4,447 428,447 428,463.7 428.6,463.7 428.6,474 429.2,474 429.2,472.6 429.8,472.6 429.8,460.8 430.4,460.8 430.4,443.2 431,443.2 431,423.9 431.6,423.9 431.6,407.4 432.2,407.4 432.2,397.5 432.8,397.5 432.8,399.6 433.4,399.6 433.4,411.8 434,411.8 434,429.6 434.6,429.6 434.6,448.9 435.2,448.9 435.2,465.1 435.8,465.1 435.8,474.6 436.4,474.6 436.4,471.8 437,471.8 437,459.2 437.6,459.2 437.6,441.2 438.2,441.2 438.2,422 438.8,422 438.8,406 439.4,406 439.4,396.9 440,396.9 440,400.4 440.6,400.4 440.6,413.4 441.2,413.4 441.2,431.5 441.8,431.5 441.8,450.7 442.4,450.7 442.4,466.4 443,466.4 443,475.1 443.6,475.1 443.6,470.8 444.3,470.8 444.3,457.6 444.9,457.6 444.9,439.2 445.5,439.2 445.5,420.1 446.1,420.1 446.1,404.7 446.7,404.7 446.7,396.4 447.3,396.4 447.3,401.4 447.9,401.4 447.9,415 448.5,415 448.5,433.5 449.1,433.5 449.1,452.5 449.7,452.5 449.7,467.7 450.3,467.7 450.3,475.5 450.9,475.5 450.9,469.8 451.5,469.8 451.5,455.9 452.1,455.9 452.1,437.3 452.7,437.3 452.7,418.3 453.3,418.3 453.3,403.4 453.9,403.4 453.9,396 454.5,396 454.5,402.4 455.1,402.4 455.1,416.7 455.7,416.7 455.7,435.4 456.3,435.4 456.3,454.3 456.9,454.3 456.9,468.8 457.5,468.8 457.5,475.8 458.1,475.8 458.1,468.7 458.7,468.7 458.7,454.1 459.3,454.1 459.3,435.3 459.9,435.3 459.9,416.5 460.5,416.5 460.5,402.3 461.1,402.3 461.1,396 461.7,396 461.7,403.5 462.3,403.5 462.3,418.4 462.9,418.4 462.9,437.4 463.5,437.4 463.5,456 464.1,456 464.1,469.9 464.7,469.9 464.7,475.5 465.3,475.5 465.3,467.6 465.9,467.6 465.9,452.4 466.5,452.4 466.5,433.3 467.1,433.3 467.1,414.8 467.7,414.8 467.7,401.2 468.3,401.2 468.3,396.3 468.9,396.3 468.9,404.7 469.5,404.7 469.5,420.2 470.1,420.2 470.1,439.4 470.7,439.4 470.7,457.7 471.3,457.7 471.3,470.9 471.9,470.9 471.9,475.1 472.5,475.1 472.5,466.3 473.2,466.3 473.2,450.5 473.8,450.5 473.8,431.3 474.4,431.3 474.4,413.1 475,413.1 475,400.2 475.6,400.2 475.6,396.7 476.2,396.7 476.2,405.9 476.8,405.9 476.8,422 477.4,422 477.4,441.3 478,441.3 478,459.3 478.6,459.3 478.6,471.9 479.2,471.9 479.2,474.6 479.8,474.6 479.8,465 480.4,465 480.4,448.7 481,448.7 481,429.3 481.6,429.3 481.6,411.5 482.2,411.5 482.2,399.3 482.8,399.3 482.8,397.2 483.4,397.2 483.4,407.2 484,407.2 484,423.8 484.6,423.8 484.6,443.2 485.2,443.2 485.2,460.9 485.8,460.9 485.8,472.7 486.4,472.7 486.4,474 487,474 487,463.6 487.6,463.6 487.6,446.8 488.2,446.8 488.2,427.3 488.8,427.3 488.8,409.9 489.4,409.9 489.4,398.4 490,398.4 490,397.8 490.6,397.8 490.6,408.6 491.2,408.6 491.2,425.7 491.8,425.7 491.8,445.2 492.4,445.2 492.4,462.4 493,462.4 493,473.5 493.6,473.5 493.6,473.4 494.2,473.4 494.2,462.2 494.8,462.2 494.8,444.8 495.4,444.8 495.4,425.4 496,425.4 496,408.4 496.6,408.4 496.6,397.7 497.2,397.7 497.2,398.5 497.8,398.5 497.8,410 498.4,410 498.4,427.4 499,427.4 499,446.7 499.6,446.7 499.6,463.5 500.2,463.5 500.2,474 500.8,474 500.8,472.9 501.4,472.9 501.4,461.2 502.1,461.2 502.1,443.7 502.7,443.7 502.7,424.3 503.3,424.3 503.3,407.6 503.9,407.6 503.9,397.3 504.5,397.3 504.5,403.2 505.1,403.2 505.1,416.8 505.7,416.8 505.7,433.3 506.3,433.3 506.3,450.8 506.9,450.8 506.9,467.2 507.5,467.2 507.5,483.5 508.1,483.5 508.1,498 508.7,498 508.7,496.6 509.3,496.6 509.3,481.2 509.9,481.2 509.9,471.7 510.5,471.7 510.5,462.6 511.1,462.6 511.1,457.4 511.7,457.4 511.7,452.2 512.3,452.2 512.3,448.4 512.9,448.4 512.9,445.7 513.5,445.7 513.5,443 514.1,443 514.1,440.5 514.7,440.5 514.7,438.3 515.3,438.3 515.3,436.2 515.9,436.2 515.9,434 516.5,434 516.5,431.8 517.1,431.8 517.1,429.4 517.7,429.4 517.7,427 518.3,427 518.3,424.6 518.9,424.6 518.9,421.1 519.5,421.1 519.5,417.1 520.1,417.1 520.1,412.4 520.7,412.4 520.7,405.4 521.3,405.4 521.3,398.3 521.9,398.3 521.9,391 522.5,391 522.5,383.6 523.1,383.6 523.1,377.1 523.7,377.1 523.7,371.4 524.3,371.4 524.3,369.8 524.9,369.8 524.9,370.3 525.5,370.3 525.5,384 526.1,384 526.1,403.8 526.7,403.8 526.7,424.3 527.3,424.3 527.3,445.1 527.9,445.1 527.9,462.1 528.5,462.1 528.5,473.9 529.1,473.9 529.1,466.2 529.7,466.2 529.7,449.1 530.3,449.1 530.3,429 531,429 531,409.6 531.6,409.6 531.6,397.6 532.2,397.6 532.2,394.9 532.8,394.9 532.8,406.1 533.4,406.1 533.4,424.1 534,424.1 534,444.6 534.6,444.6 534.6,462.7 535.2,462.7 535.2,474.1 535.8,474.1 535.8,473.2 536.4,473.2 536.4,460.8 537,460.8 537,442 537.6,442 537.6,421.4 538.2,421.4 538.2,403.9 538.8,403.9 538.8,393.6 539.4,393.6 539.4,396.6 540,396.6 540,410.1 540.6,410.1 540.6,429.5 541.2,429.5 541.2,450.1 541.8,450.1 541.8,466.9 542.4,466.9 542.4,476.1 543,476.1 543,471 543.6,471 543.6,456.3 544.2,456.3 544.2,436.4 544.8,436.4 544.8,415.9 545.4,415.9 545.4,399.8 546,399.8 546,391.9 546.6,391.9 546.6,399 547.2,399 547.2,414.7 547.8,414.7 547.8,435.1 548.4,435.1 548.4,455.4 549,455.4 549,470.6 549.6,470.6 549.6,476.7 550.2,476.7 550.2,468.1 550.8,468.1 550.8,451.4 551.4,451.4 551.4,430.6 552,430.6 552,410.6 552.6,410.6 552.6,396.3 553.2,396.3 553.2,392.2 553.8,392.2 553.8,402.2 554.4,402.2 554.4,419.8 555,419.8 555,440.9 555.6,440.9 555.6,460.4 556.2,460.4 556.2,473.8 556.8,473.8 556.8,475.7 557.4,475.7 557.4,464.5 558,464.5 558,446 558.6,446 558.6,424.7 559.2,424.7 559.2,405.6 559.9,405.6 559.9,393.3 560.5,393.3 560.5,393.5 561.1,393.5 561.1,406 561.7,406 561.7,425.2 562.3,425.2 562.3,446.6 562.9,446.6 562.9,465.1 563.5,465.1 563.5,476.3 564.1,476.3 564.1,473.9 564.7,473.9 564.7,460.3 565.3,460.3 565.3,440.3 565.9,440.3 565.9,418.9 566.5,418.9 566.5,401 567.1,401 567.1,391 567.7,391 567.7,395.5 568.3,395.5 568.3,410.4 568.9,410.4 568.9,430.9 569.5,430.9 569.5,452.3 570.1,452.3 570.1,469.3 570.7,469.3 570.7,478.1 571.3,478.1 571.3,471.4 571.9,471.4 571.9,455.5 572.5,455.5 572.5,434.4 573.1,434.4 573.1,413.2 573.7,413.2 573.7,397 574.3,397 574.3,389.8 574.9,389.8 574.9,398.3 575.5,398.3 575.5,415.3 576.1,415.3 576.1,436.9 576.7,436.9 576.7,457.8 577.3,457.8 577.3,473 577.9,473 577.9,478 578.5,478 578.5,468.2 579.1,468.2 579.1,450.2 579.7,450.2 579.7,428.4 580.3,428.4 580.3,408 580.9,408 580.9,393.8 581.5,393.8 581.5,391 582.1,391 582.1,402.2 582.7,402.2 582.7,421 583.3,421 583.3,443 583.9,443 583.9,462.9 584.5,462.9 584.5,476 585.1,476 585.1,476.7 585.7,476.7 585.7,464.2 586.3,464.2 586.3,444.7 586.9,444.7 586.9,422.5 587.5,422.5 587.5,403.2 588.1,403.2 588.1,391.3 588.8,391.3 588.8,392.9 589.4,392.9 589.4,406.6 590,406.6 590,426.9 590.6,426.9 590.6,449 591.2,449 591.2,467.6 591.8,467.6 591.8,478.4 592.4,478.4 592.4,474.6 593,474.6 593,459.7 593.6,459.7 593.6,438.8 594.2,438.8 594.2,416.8 594.8,416.8 594.8,399 595.4,399 595.4,389.5 596,389.5 596,395.6 596.6,395.6 596.6,411.6 597.2,411.6 597.2,433.1 597.8,433.1 597.8,454.9 598.4,454.9 598.4,471.8 599,471.8 599,480 599.6,480 599.6,471.7 600.2,471.7 600.2,454.7 600.8,454.7 600.8,432.8 601.4,432.8 601.4,411.3 602,411.3 602,395.3 602.6,395.3 602.6,389.4 603.2,389.4 603.2,399 603.8,399 603.8,417.1 604.4,417.1 604.4,439.3 605,439.3 605,460.4 605.6,460.4 605.6,475.4 606.2,475.4 606.2,479.1 606.8,479.1 606.8,468.2 607.4,468.2 607.4,449.2 608,449.2 608,426.8 608.6,426.8 608.6,406.2 609.2,406.2 609.2,392.3 609.8,392.3 609.8,390.9 610.4,390.9 610.4,403.2 611,403.2 611,422.9 611.6,422.9 611.6,445.6 612.2,445.6 612.2,465.6 612.8,465.6 612.8,478.3 613.4,478.3 613.4,477.5 614,477.5 614,463.9 614.6,463.9 614.6,443.4 615.2,443.4 615.2,420.8 615.8,420.8 615.8,401.5 616.4,401.5 616.4,390 617,390 617,393.1 617.7,393.1 617.7,407.9 618.3,407.9 618.3,429.1 618.9,429.1 618.9,451.7 619.5,451.7 619.5,470.2 620.1,470.2 620.1,480.4 620.7,480.4 620.7,475.1 621.3,475.1 621.3,459.1 621.9,459.1 621.9,437.4 622.5,437.4 622.5,415 623.1,415 623.1,397.3 623.7,397.3 623.7,388.5 624.3,388.5 624.3,396 624.9,396 624.9,412.9 625.5,412.9 625.5,435 626.1,435 626.1,457 626.7,457 626.7,473.8 627.3,473.8 627.3,481.3 627.9,481.3 627.9,472.4 628.5,472.4 628.5,454.8 629.1,454.8 629.1,432.5 629.7,432.5 629.7,410.7 630.3,410.7 630.3,394.6 630.9,394.6 630.9,388.8 631.5,388.8 631.5,398.6 632.1,398.6 632.1,416.9 632.7,416.9 632.7,439.5 633.3,439.5 633.3,461 633.9,461 633.9,476.3 634.5,476.3 634.5,480.5 635.1,480.5 635.1,469.7 635.7,469.7 635.7,450.7 636.3,450.7 636.3,428 636.9,428 636.9,406.9 637.5,406.9 637.5,392.4 638.1,392.4 638.1,389.8 638.7,389.8 638.7,401.6 639.3,401.6 639.3,421.1 639.9,421.1 639.9,444 640.5,444 640.5,464.7 641.1,464.7 641.1,478.3 641.7,478.3 641.7,479.2 642.3,479.2 642.3,466.6 642.9,466.6 642.9,446.4 643.5,446.4 643.5,423.5 644.1,423.5 644.1,403.3 644.7,403.3 644.7,390.5 645.3,390.5 645.3,391.3 645.9,391.3 645.9,404.8 646.6,404.8 646.6,425.5 647.2,425.5 647.2,448.4 647.8,448.4 647.8,468.1 648.4,468.1 648.4,480 649,480 649,477.6 649.6,477.6 649.6,463.2 650.2,463.2 650.2,442 650.8,442 650.8,419.2 651.4,419.2 651.4,400 652,400 652,389.1 652.6,389.1 652.6,393.1 653.2,393.1 653.2,408.4 653.8,408.4 653.8,430 654.4,430 654.4,452.7 655,452.7 655,471.3 655.6,471.3 655.6,481.3 656.2,481.3 656.2,475.6 656.8,475.6 656.8,459.5 657.4,459.5 657.4,437.5 658,437.5 658,414.9 658.6,414.9 658.6,397 659.2,397 659.2,388 659.8,388 659.8,395.3 660.4,395.3 660.4,412.2 661,412.2 661,434.5 661.6,434.5 661.6,456.9 662.2,456.9 662.2,474.1 662.8,474.1 662.8,482 663.4,482 663.4,473.2 664,473.2 664,455.6 664.6,455.6 664.6,433 665.2,433 665.2,410.8 665.8,410.8 665.8,394.4 666.4,394.4 666.4,388.1 667,388.1 667,397.9 667.6,397.9 667.6,416.3 668.2,416.3 668.2,439.1 668.8,439.1 668.8,460.9 669.4,460.9 669.4,476.6 670,476.6 670,481.2 670.6,481.2 670.6,470.5 671.2,470.5 671.2,451.4 671.8,451.4 671.8,428.4 672.4,428.4 672.4,407 673,407 673,392.1 673.6,392.1 673.6,389.1 674.2,389.1 674.2,400.8 674.8,400.8 674.8,420.5 675.5,420.5 675.5,443.6 676.1,443.6 676.1,464.6 676.7,464.6 676.7,478.6 677.3,478.6 677.3,479.8 677.9,479.8 677.9,467.2 678.5,467.2 678.5,447 679.1,447 679.1,424 679.7,424 679.7,403.6 680.3,403.6 680.3,390.5 680.9,390.5 680.9,391 681.5,391 681.5,404.4 682.1,404.4 682.1,425.1 682.7,425.1 682.7,448 683.3,448 683.3,467.8 683.9,467.8 683.9,479.9 684.5,479.9 684.5,477.8 685.1,477.8 685.1,463.6 685.7,463.6 685.7,442.6 686.3,442.6 686.3,419.8 686.9,419.8 686.9,400.6 687.5,400.6 687.5,389.5 688.1,389.5 688.1,393.2 688.7,393.2 688.7,408.3 689.3,408.3 689.3,429.6 689.9,429.6 689.9,452.2 690.5,452.2 690.5,470.7 691.1,470.7 691.1,480.8 691.7,480.8 691.7,475.5 692.3,475.5 692.3,459.7 692.9,459.7 692.9,438.1 693.5,438.1 693.5,415.7 694.1,415.7 694.1,398 694.7,398 694.7,388.9 695.3,388.9 695.3,395.8 695.9,395.8 695.9,412.3 696.5,412.3 696.5,434.1 697.1,434.1 697.1,456.2 697.7,456.2 697.7,473.1 698.3,473.1 698.3,481.2 698.9,481.2 698.9,472.8 699.5,472.8 699.5,455.6 700.1,455.6 700.1,433.6 700.7,433.6 700.7,412 701.3,412 701.3,395.8 701.9,395.8 701.9,389.4 702.5,389.4 702.5,398.7 703.1,398.7 703.1,416.5 703.7,416.5 703.7,438.6 704.4,438.6 704.4,459.9 705,459.9 705,475.2 705.6,475.2 705.6,480 706.2,480 706.2,469.8 706.8,469.8 706.8,451.5 707.4,451.5 707.4,429.2 708,429.2 708,408.5 708.6,408.5 708.6,394 709.2,394 709.2,390.8 709.8,390.8 709.8,401.9 710.4,401.9 710.4,420.8 711,420.8 711,443 711.6,443 711.6,463.3 712.2,463.3 712.2,476.9 712.8,476.9 712.8,478.5 713.4,478.5 713.4,466.5 714,466.5 714,447.2 714.6,447.2 714.6,425 715.2,425 715.2,405.3 715.8,405.3 715.8,392.5 716.4,392.5 716.4,392.6 717,392.6 717,405.4 717.6,405.4 717.6,425.1 718.2,425.1 718.2,447.2 718.8,447.2 718.8,466.4 719.4,466.4 719.4,478.2 720,478.2 720,476.6 720.6,476.6 720.6,463 721.2,463 721.2,442.9 721.8,442.9 721.8,420.9 722.4,420.9 722.4,402.4 723,402.4 723,391.5 723.6,391.5 723.6,394.7 724.2,394.7 724.2,409.1 724.8,409.1 724.8,429.6 725.4,429.6 725.4,451.3 726,451.3 726,469.2 726.6,469.2 726.6,479.1 727.2,479.1 727.2,474.2 727.8,474.2 727.8,459.1 728.4,459.1 728.4,438.3 729,438.3 729,416.8 729.6,416.8 729.6,399.7 730.2,399.7 730.2,390.8 730.8,390.8 730.8,397.4 731.4,397.4 731.4,413.4 732,413.4 732,434.6 732.6,434.6 732.6,455.9 733.3,455.9 733.3,472.1 733.9,472.1 733.9,479.4 734.5,479.4 734.5,470.9 735.1,470.9 735.1,453.9 735.7,453.9 735.7,432.5 736.3,432.5 736.3,411.7 736.9,411.7 736.9,396.5 737.5,396.5 737.5,391.6 738.1,391.6 738.1,401.4 738.7,401.4 738.7,419.2 739.3,419.2 739.3,440.8 739.9,440.8 739.9,461 740.5,461 740.5,475 741.1,475 741.1,477.6 741.7,477.6 741.7,466.5 742.3,466.5 742.3,448 742.9,448 742.9,426.3 743.5,426.3 743.5,406.8 744.1,406.8 744.1,394.1 744.7,394.1 744.7,393.7 745.3,393.7 745.3,406 745.9,406 745.9,425.2 746.5,425.2 746.5,446.8 747.1,446.8 747.1,465.6 747.7,465.6 747.7,477 748.3,477 748.3,475.1 748.9,475.1 748.9,461.6 749.5,461.6 749.5,441.8 750.1,441.8 750.1,420.4 750.7,420.4 750.7,402.6 751.3,402.6 751.3,392.4 751.9,392.4 751.9,396.6 752.5,396.6 752.5,411.1 753.1,411.1 753.1,431.4 753.7,431.4 753.7,452.5 754.3,452.5 754.3,469.4 754.9,469.4 754.9,478.2 755.5,478.2 755.5,471.9 756.1,471.9 756.1,456.3 756.7,456.3 756.7,435.7 757.3,435.7 757.3,414.9 757.9,414.9 757.9,399 758.5,399 758.5,391.9 759.1,391.9 759.1,400.2 759.7,400.2 759.7,416.6 760.3,416.6 760.3,437.5 760.9,437.5 760.9,457.8 761.5,457.8 761.5,472.6 762.2,472.6 762.2,477.5 762.8,477.5 762.8,467.9 763.4,467.9 763.4,450.6 764,450.6 764,429.6 764.6,429.6 764.6,409.9 765.2,409.9 765.2,396.2 765.8,396.2 765.8,393.6 766.4,393.6 766.4,404.4 767,404.4 767,422.4 767.6,422.4 767.6,443.5 768.2,443.5 768.2,462.5 768.8,462.5 768.8,475 769.4,475 769.4,475.4 770,475.4 770,463.4 770.6,463.4 770.6,444.7 771.2,444.7 771.2,423.7 771.8,423.7 771.8,405.4 772.4,405.4 772.4,394.3 773,394.3 773,396 773.6,396 773.6,409.1 774.2,409.1 774.2,428.4 774.8,428.4 774.8,449.3 775.4,449.3 775.4,466.7 776,466.7 776,476.6 776.6,476.6 776.6,472.6 777.2,472.6 777.2,458.4 777.8,458.4 777.8,438.7 778.4,438.7 778.4,418.1 779,418.1 779,401.6 779.6,401.6 779.6,393 780.2,393 780.2,399.2 780.8,399.2 780.8,414.3 781.4,414.3 781.4,434.4 782,434.4 782,454.7 782.6,454.7 782.6,470.2 783.2,470.2 783.2,477.2 783.8,477.2 783.8,469.2 784.4,469.2 784.4,453.1 785,453.1 785,432.7 785.6,432.7 785.6,412.9 786.2,412.9 786.2,398.5 786.8,398.5 786.8,393.6 787.4,393.6 787.4,402.9 788,402.9 788,419.8 788.6,419.8 788.6,440.4 789.2,440.4 789.2,459.6 789.8,459.6 789.8,473 790.4,473 790.4,475.6 791.1,475.6 791.1,465.1 791.7,465.1 791.7,447.5 792.3,447.5 792.3,426.9 792.9,426.9 792.9,408.3 793.5,408.3 793.5,396.1 794.1,396.1 794.1,395.6 794.7,395.6 794.7,407.3 795.3,407.3 795.3,425.6 795.9,425.6 795.9,446.2 796.5,446.2 796.5,464.1 797.1,464.1 797.1,475 797.7,475 797.7,473.3 798.3,473.3 798.3,460.6 798.9,460.6 798.9,441.7 799.5,441.7 799.5,421.2 800.1,421.2 800.1,404.2 800.7,404.2 800.7,394.4 801.3,394.4 801.3,398.3 801.9,398.3 801.9,412.1 802.5,412.1 802.5,431.5 803.1,431.5 803.1,451.7 803.7,451.7 803.7,467.9 804.3,467.9 804.3,476.3 804.9,476.3 804.9,470.3 805.5,470.3 805.5,455.5 806.1,455.5 806.1,435.8 806.7,435.8 806.7,416 807.3,416 807.3,400.7 807.9,400.7 807.9,393.8 808.5,393.8 808.5,401.6 809.1,401.6 809.1,417.4 809.7,417.4 809.7,437.3 810.3,437.3 810.3,456.8 810.9,456.8 810.9,471 811.5,471 811.5,475.8 812.1,475.8 812.1,466.7 812.7,466.7 812.7,450.2 813.3,450.2 813.3,430 813.9,430 813.9,411.1 814.5,411.1 814.5,398 815.1,398 815.1,395.4 815.7,395.4 815.7,405.6 816.3,405.6 816.3,422.9 816.9,422.9 816.9,443.1 817.5,443.1 817.5,461.4 818.1,461.4 818.1,473.4 818.7,473.4 818.7,473.9 819.3,473.9 819.3,462.5 820,462.5 820,444.5 820.6,444.5 820.6,424.4 821.2,424.4 821.2,406.8 821.8,406.8 821.8,396 822.4,396 822.4,397.6 823,397.6 823,410.1 823.6,410.1 823.6,428.6 824.2,428.6 824.2,448.7 824.8,448.7 824.8,465.4 825.4,465.4 825.4,475 826,475 826,471.3 826.6,471.3 826.6,457.8 827.2,457.8 827.2,438.9 827.8,438.9 827.8,419.1 828.4,419.1 828.4,403.2 829,403.2 829,394.9 829.6,394.9 829.6,400.7 830.2,400.7 830.2,415.2 830.8,415.2 830.8,434.5 831.4,434.5 831.4,454 832,454 832,469 832.6,469 832.6,475.8 833.2,475.8 833.2,468.2 833.8,468.2 833.8,452.9 834.4,452.9 834.4,433.3 835,433.3 835,414.3 835.6,414.3 835.6,400.3 836.2,400.3 836.2,395.6 836.8,395.6 836.8,404.5 837.4,404.5 837.4,420.7 838,420.7 838,440.4 838.6,440.4 838.6,459 839.2,459 839.2,471.9 839.8,471.9 839.8,474.6 840.4,474.6 840.4,464.5 841,464.5 841,447.6 841.6,447.6 841.6,427.8 842.2,427.8 842.2,409.9 842.8,409.9 842.8,398.2 843.4,398.2 843.4,397.6 844,397.6 844,408.8 844.6,408.8 844.6,426.4 845.2,426.4 845.2,446.2 845.8,446.2 845.8,463.4 846.4,463.4 846.4,474 847,474 847,472.5 847.6,472.5 847.6,460.3 848.2,460.3 848.2,442.2 848.9,442.2 848.9,422.6 849.5,422.6 849.5,406.1 850.1,406.1 850.1,396.7 850.7,396.7 850.7,400.3 851.3,400.3 851.3,413.6 851.9,413.6 851.9,432.2 852.5,432.2 852.5,451.6 853.1,451.6 853.1,467.3 853.7,467.3 853.7,475.4 854.3,475.4 854.3,469.8 854.9,469.8 854.9,455.7 855.5,455.7 855.5,436.7 856.1,436.7 856.1,417.6 856.7,417.6 856.7,402.9 857.3,402.9 857.3,396.1 857.9,396.1 857.9,403.5 858.5,403.5 858.5,418.6 859.1,418.6 859.1,437.9 859.7,437.9 859.7,456.7 860.3,456.7 860.3,470.5 860.9,470.5 860.9,475.2 861.5,475.2 861.5,466.5 862.1,466.5 862.1,450.6 862.7,450.6 862.7,431.1 863.3,431.1 863.3,412.7 863.9,412.7 863.9,399.9 864.5,399.9 864.5,397.3 865.1,397.3 865.1,407.1 865.7,407.1 865.7,423.9 866.3,423.9 866.3,443.5 866.9,443.5 866.9,461.3 867.5,461.3 867.5,473 868.1,473 868.1,473.6 868.7,473.6 868.7,462.6 869.3,462.6 869.3,445.2 869.9,445.2 869.9,425.5 870.5,425.5 870.5,408.3 871.1,408.3 871.1,397.7 871.7,397.7 871.7,399.2 872.3,399.2 872.3,411.3 872.9,411.3 872.9,429.3 873.5,429.3 873.5,448.9 874.1,448.9 874.1,465.4 874.7,465.4 874.7,474.8 875.3,474.8 875.3,471.3 875.9,471.3 875.9,458.1 876.5,458.1 876.5,439.6 877.1,439.6 877.1,420.1 877.8,420.1 877.8,404.5 878.4,404.5 878.4,396.2 879,396.2 879,401.8 879.6,401.8 879.6,416 880.2,416 880.2,435 880.8,435 880.8,454.1 881.4,454.1 881.4,468.9 882,468.9 882,475.8 882.6,475.8 882.6,468.3 883.2,468.3 883.2,453.2 883.8,453.2 883.8,433.9 884.4,433.9 884.4,415.1 885,415.1 885,401.2 885.6,401.2 885.6,396.4 886.2,396.4 886.2,405.1 886.8,405.1 886.8,421.1 887.4,421.1 887.4,440.6 888,440.6 888,459 888.6,459 888.6,471.8 889.2,471.8 889.2,474.6 889.8,474.6 889.8,464.7 890.4,464.7 890.4,447.9 891,447.9 891,428.3 891.6,428.3 891.6,410.4 892.2,410.4 892.2,398.6 892.8,398.6 892.8,398 893.4,398 893.4,409 894,409 894,426.4 894.6,426.4 894.6,446.1 895.2,446.1 895.2,463.4 895.8,463.4 895.8,474 896.4,474 896.4,472.6 897,472.6 897,460.5 897.6,460.5 897.6,442.4 898.2,442.4 898.2,422.8 898.8,422.8 898.8,406.3 899.4,406.3 899.4,396.8 900,396.8 900,400.2 900.6,400.2 900.6,413.4 901.2,413.4 901.2,432 901.8,432 901.8,451.5 902.4,451.5 902.4,467.2 903,467.2 903,475.5 903.6,475.5 903.6,470 904.2,470 904.2,455.8 904.8,455.8 904.8,436.8 905.4,436.8 905.4,417.5 906,417.5 906,402.7 906.7,402.7 906.7,395.8 907.3,395.8 907.3,403.2 907.9,403.2 907.9,418.3 908.5,418.3 908.5,437.7 909.1,437.7 909.1,456.5 909.7,456.5 909.7,470.4 910.3,470.4 910.3,475.3 910.9,475.3 910.9,466.6 911.5,466.6 911.5,450.6 912.1,450.6 912.1,431.1 912.7,431.1 912.7,412.6 913.3,412.6 913.3,399.7 913.9,399.7 913.9,396.9 914.5,396.9 914.5,406.8 915.1,406.8 915.1,423.6 915.7,423.6 915.7,443.3 916.3,443.3 916.3,461.2 916.9,461.2 916.9,473 917.5,473 917.5,473.7 918.1,473.7 918.1,462.7 918.7,462.7 918.7,445.2 919.3,445.2 919.3,425.5 919.9,425.5 919.9,408.2 920.5,408.2 920.5,397.5 921.1,397.5 921.1,398.9 921.7,398.9 921.7,411 922.3,411 922.3,429.1 922.9,429.1 922.9,448.8 923.5,448.8 923.5,465.3 924.1,465.3 924.1,474.8 924.7,474.8 924.7,471.4 925.3,471.4 925.3,458.2 925.9,458.2 925.9,439.6 926.5,439.6 926.5,420 927.1,420 927.1,404.3 927.7,404.3 927.7,395.9 928.3,395.9 928.3,406.9 928.9,406.9 928.9,420.7 929.5,420.7 929.5,438.1 930.1,438.1 930.1,455.4 930.7,455.4 930.7,471.7 931.3,471.7 931.3,487.9 931.9,487.9 931.9,498 932.5,498 932.5,492.1 933.1,492.1 933.1,478.5 933.7,478.5 933.7,469.1 934.3,469.1 934.3,461.1 934.9,461.1 934.9,455.9 935.6,455.9 935.6,450.7 936.2,450.7 936.2,447.7 936.8,447.7 936.8,445 937.4,445 937.4,442.3 938,442.3 938,439.9 938.6,439.9 938.6,437.7 939.2,437.7 939.2,435.6 939.8,435.6 939.8,433.4 940.4,433.4 940.4,431.2 941,431.2 941,428.8 941.6,428.8 941.6,426.4 942.2,426.4 942.2,424 942.8,424 942.8,420 943.4,420 943.4,416 944,416 944,410.5 944.6,410.5 944.6,403.5 945.2,403.5 945.2,396.3 945.8,396.3 945.8,388.9 946.4,388.9 946.4,381.8 947,381.8 947,375.3 947.6,375.3 947.6,370.7 948.2,370.7 948.2,369.8 948.8,369.8 948.8,373.7 949.4,373.7 949.4,389.5 950,389.5 950,409.3 950.6,409.3 950.6,430 951.2,430 951.2,449.8 951.8,449.8 951.8,466.9 952.4,466.9 952.4,474.4 953,474.4 953,463 953.6,463 953.6,443.6 954.2,443.6 954.2,423.6 954.8,423.6 954.8,404.3 955.4,404.3 955.4,395.6 956,395.6 956,395.7 956.6,395.7 956.6,407.7 957.2,407.7 957.2,426.1 957.8,426.1 957.8,446.5 958.4,446.5 958.4,464 959,464 959,474.7 959.6,474.7 959.6,472.5 960.2,472.5 960.2,459.5 960.8,459.5 960.8,440.6 961.4,440.6 961.4,420.1 962,420.1 962,403 962.6,403 962.6,393.3 963.2,393.3 963.2,397.1 963.8,397.1 963.8,411 964.5,411 964.5,430.4 965.1,430.4 965.1,450.8 965.7,450.8 965.7,467.4 966.3,467.4 966.3,476.2 966.9,476.2 966.9,470.7 967.5,470.7 967.5,456 968.1,456 968.1,436.1 968.7,436.1 968.7,415.7 969.3,415.7 969.3,399.7 969.9,399.7 969.9,391.8 970.5,391.8 970.5,399 971.1,399 971.1,414.6 971.7,414.6 971.7,434.9 972.3,434.9 972.3,455.1 972.9,455.1 972.9,470.4 973.5,470.4 973.5,476.8 974.1,476.8 974.1,468.5 974.7,468.5 974.7,452.1 975.3,452.1 975.3,431.4 975.9,431.4 975.9,411.4 976.5,411.4 976.5,396.8 977.1,396.8 977.1,391.9 977.7,391.9 977.7,401.4 978.3,401.4 978.3,418.5 978.9,418.5 978.9,439.5 979.5,439.5 979.5,459.2 980.1,459.2 980.1,473.1 980.7,473.1 980.7,476.2 981.3,476.2 981.3,465.8 981.9,465.8 981.9,447.9 982.5,447.9 982.5,426.7 983.1,426.7 983.1,407.3 983.7,407.3 983.7,394.2 984.3,394.2 984.3,392.7 984.9,392.7 984.9,404.1 985.5,404.1 985.5,422.7 986.1,422.7 986.1,444.1 986.7,444.1 986.7,463.1 987.3,463.1 987.3,475.4 987.9,475.4 987.9,475.1 988.5,475.1 988.5,462.7 989.1,462.7 989.1,443.4 989.7,443.4 989.7,421.9 990.3,421.9 990.3,403.3 990.9,403.3 990.9,392 991.5,392 991.5,393.9 992.1,393.9 992.1,407.4 992.7,407.4 992.7,427.2 993.4,427.2 993.4,448.7 994,448.7 994,466.8 994.6,466.8 994.6,477.2 995.2,477.2 995.2,473.5 995.8,473.5 995.8,459.1 996.4,459.1 996.4,438.8 997,438.8 997,417.2 997.6,417.2 997.6,399.7 998.2,399.7 998.2,390.2 998.8,390.2 998.8,395.7 999.4,395.7 999.4,411 1000,411 1000,431.9 1000.6,431.9 1000.6,453.3 1001.2,453.3 1001.2,470.1 1001.8,470.1 1001.8,478.6 1002.4,478.6 1002.4,471.5 1003,471.5 1003,455.3 1003.6,455.3 1003.6,434.1 1004.2,434.1 1004.2,412.8 1004.8,412.8 1004.8,396.7 1005.4,396.7 1005.4,389.6 1006,389.6 1006,398.2 1006.6,398.2 1006.6,415.2 1007.2,415.2 1007.2,436.8 1007.8,436.8 1007.8,457.7 1008.4,457.7 1008.4,473.2 1009,473.2 1009,478.5 1009.6,478.5 1009.6,468.9 1010.2,468.9 1010.2,451.1 1010.8,451.1 1010.8,429.3 1011.4,429.3 1011.4,408.7 1012,408.7 1012,394.1 1012.6,394.1 1012.6,390.5 1013.2,390.5 1013.2,401.2 1013.8,401.2 1013.8,419.7 1014.4,419.7 1014.4,441.7 1015,441.7 1015,462 1015.6,462 1015.6,475.8 1016.2,475.8 1016.2,477.7 1016.8,477.7 1016.8,465.9 1017.4,465.9 1017.4,446.8 1018,446.8 1018,424.6 1018.6,424.6 1018.6,404.8 1019.2,404.8 1019.2,391.9 1019.8,391.9 1019.8,391.8 1020.4,391.8 1020.4,404.6 1021,404.6 1021,424.4 1021.6,424.4 1021.6,446.6 1022.3,446.6 1022.3,466 1022.9,466 1022.9,477.9 1023.5,477.9 1023.5,476.3 1024.1,476.3 1024.1,462.6 1024.7,462.6 1024.7,442.2 1025.3,442.2 1025.3,419.9 1025.9,419.9 1025.9,401.2 1026.5,401.2 1026.5,390.2 1027.1,390.2 1027.1,393.7 1027.7,393.7 1027.7,408.4 1028.3,408.4 1028.3,429.3 1028.9,429.3 1028.9,451.5 1029.5,451.5 1029.5,469.7 1030.1,469.7 1030.1,479.7 1030.7,479.7 1030.7,474.4 1031.3,474.4 1031.3,458.8 1031.9,458.8 1031.9,437.4 1032.5,437.4 1032.5,415.4 1033.1,415.4 1033.1,397.9 1033.7,397.9 1033.7,388.9 1034.3,388.9 1034.3,396 1034.9,396 1034.9,412.5 1035.5,412.5 1035.5,434.3 1036.1,434.3 1036.1,456.2 1036.7,456.2 1036.7,473 1037.3,473 1037.3,480.7 1037.9,480.7 1037.9,472.1 1038.5,472.1 1038.5,454.7 1039.1,454.7 1039.1,432.6 1039.7,432.6 1039.7,411 1040.3,411 1040.3,394.9 1040.9,394.9 1040.9,389.1 1041.5,389.1 1041.5,398.8 1042.1,398.8 1042.1,416.9 1042.7,416.9 1042.7,439.4 1043.3,439.4 1043.3,460.7 1043.9,460.7 1043.9,475.9 1044.5,475.9 1044.5,480 1045.1,480 1045.1,469.3 1045.7,469.3 1045.7,450.4 1046.3,450.4 1046.3,427.7 1046.9,427.7 1046.9,406.8 1047.5,406.8 1047.5,392.4 1048.1,392.4 1048.1,390.2 1048.7,390.2 1048.7,402 1049.3,402 1049.3,421.6 1049.9,421.6 1049.9,444.4 1050.5,444.4 1050.5,464.9 1051.2,464.9 1051.2,478.3 1051.8,478.3 1051.8,478.8 1052.4,478.8 1052.4,465.9 1053,465.9 1053,445.7 1053.6,445.7 1053.6,422.8 1054.2,422.8 1054.2,402.9 1054.8,402.9 1054.8,390.4 1055.4,390.4 1055.4,391.8 1056,391.8 1056,405.7 1056.6,405.7 1056.6,426.5 1057.2,426.5 1057.2,449.3 1057.8,449.3 1057.8,468.7 1058.4,468.7 1058.4,480.1 1059,480.1 1059,476.9 1059.6,476.9 1059.6,462.1 1060.2,462.1 1060.2,440.8 1060.8,440.8 1060.8,418 1061.4,418 1061.4,399.3 1062,399.3 1062,388.9 1062.6,388.9 1062.6,394 1063.2,394 1063.2,409.7 1063.8,409.7 1063.8,431.5 1064.4,431.5 1064.4,454 1065,454 1065,472 1065.6,472 1065.6,481.4 1066.2,481.4 1066.2,474.5 1066.8,474.5 1066.8,457.9 1067.4,457.9 1067.4,435.8 1068,435.8 1068,413.4 1068.6,413.4 1068.6,396.2 1069.2,396.2 1069.2,388 1069.8,388 1069.8,396.6 1070.4,396.6 1070.4,414.1 1071,414.1 1071,436.5 1071.6,436.5 1071.6,458.6 1072.2,458.6 1072.2,475 1072.8,475 1072.8,481.4 1073.4,481.4 1073.4,471.7 1074,471.7 1074,453.4 1074.6,453.4 1074.6,430.7 1075.2,430.7 1075.2,409 1075.8,409 1075.8,393.4 1076.4,393.4 1076.4,388.9 1077,388.9 1077,399.7 1077.6,399.7 1077.6,418.8 1078.2,418.8 1078.2,441.8 1078.8,441.8 1078.8,463.1 1079.4,463.1 1079.4,477.7 1080.1,477.7 1080.1,480.1 1080.7,480.1 1080.7,468 1081.3,468 1081.3,448.1 1081.9,448.1 1081.9,425 1082.5,425 1082.5,404.2 1083.1,404.2 1083.1,390.8 1083.7,390.8 1083.7,390.6 1084.3,390.6 1084.3,403.9 1084.9,403.9 1084.9,424.6 1085.5,424.6 1085.5,447.7 1086.1,447.7 1086.1,467.8 1086.7,467.8 1086.7,480.1 1087.3,480.1 1087.3,478.1 1087.9,478.1 1087.9,463.6 1088.5,463.6 1088.5,442.3 1089.1,442.3 1089.1,419.2 1089.7,419.2 1089.7,399.8 1090.3,399.8 1090.3,388.8 1090.9,388.8 1090.9,393 1091.5,393 1091.5,408.6 1092.1,408.6 1092.1,430.5 1092.7,430.5 1092.7,453.5 1093.3,453.5 1093.3,472 1093.9,472 1093.9,481.7 1094.5,481.7 1094.5,475.3 1095.1,475.3 1095.1,458.6 1095.7,458.6 1095.7,436.3 1096.3,436.3 1096.3,413.6 1096.9,413.6 1096.9,396 1097.5,396 1097.5,387.5 1098.1,387.5 1098.1,396.1 1098.7,396.1 1098.7,413.8 1099.3,413.8 1099.3,436.6 1099.9,436.6 1099.9,458.9 1100.5,458.9 1100.5,475.4 1101.1,475.4 1101.1,481.6 1101.7,481.6 1101.7,471.7 1102.3,471.7 1102.3,453.2 1102.9,453.2 1102.9,430.3 1103.5,430.3 1103.5,408.5 1104.1,408.5 1104.1,393.1 1104.7,393.1 1104.7,389.1 1105.3,389.1 1105.3,400.2 1105.9,400.2 1105.9,419.5 1106.5,419.5 1106.5,442.5 1107.1,442.5 1107.1,463.7 1107.7,463.7 1107.7,477.9 1108.4,477.9 1108.4,479.8 1109,479.8 1109,467.4 1109.6,467.4 1109.6,447.4 1110.2,447.4 1110.2,424.4 1110.8,424.4 1110.8,404 1111.4,404 1111.4,391 1112,391 1112,391.3 1112.6,391.3 1112.6,404.8 1113.2,404.8 1113.2,425.4 1113.8,425.4 1113.8,448.3 1114.4,448.3 1114.4,468 1115,468 1115,479.8 1115.6,479.8 1115.6,477.2 1116.2,477.2 1116.2,462.7 1116.8,462.7 1116.8,441.6 1117.4,441.6 1117.4,418.9 1118,418.9 1118,400.1 1118.6,400.1 1118.6,389.6 1119.2,389.6 1119.2,394.3 1119.8,394.3 1119.8,409.8 1120.4,409.8 1120.4,431.4 1121,431.4 1121,453.8 1121.6,453.8 1121.6,471.6 1122.2,471.6 1122.2,480.9 1122.8,480.9 1122.8,474.1 1123.4,474.1 1123.4,457.5 1123.6,457.5" fill="none" stroke="#00ff00" stroke-width=".95" stroke-linejoin="miter"/>
<path d="M206.3 333V546M1053.6 265.4V546" stroke="#10b4c8" stroke-width="1.1" fill="none"/><path d="M216.4 511V526M1062.4 485.4V500" stroke="#18dcec" stroke-width="1.1" fill="none"/>
<polyline points="67.6,538.9 68.1,540.2 68.7,537.7 69.2,539 69.8,539.8 70.3,539.5 70.9,539.3 71.4,540.1 72,536.5 72.5,540.3 73.1,539.6 73.6,539.5 74.2,538.2 74.7,538.6 75.3,539.3 75.8,539.2 76.4,538.5 76.9,539.4 77.5,538.7 78,540.4 78.6,538.3 79.1,538.7 79.7,538.6 80.2,541.1 80.8,539.1 81.3,539.4 81.9,537.9 82.4,538.6 83,538.6 83.5,538.1 84.1,539 84.6,539.3 85.2,538.8 85.7,538.4 86.3,538.1 86.8,540.6 87.4,538.6 87.9,539.1 88.5,537.8 89,540.1 89.6,538.6 90.1,539.5 90.7,538 91.2,538.7 91.8,537.8 92.3,539.5 92.9,538.1 93.4,540.4 94,538.6 94.5,538.7 95.1,540.1 95.6,538.8 96.2,540.4 96.7,537.8 97.3,538.5 97.8,539.5 98.4,539.9 98.9,541.1 99.5,538.8 100,538.9 100.6,538.7 101.1,538.8 101.7,539.1 102.2,539.8 102.8,540.5 103.3,537.2 103.9,539.4 104.4,539.3 105,540.3 105.5,538.7 106.1,540.2 106.6,538.5 107.2,540.3 107.7,539.9 108.3,538.8 108.8,539.5 109.4,538.4 109.9,538.3 110.5,539.3 111,539.6 111.6,539.4 112.1,539.9 112.7,539.3 113.2,538.3 113.8,538.3 114.3,540.2 114.9,539.4 115.4,539.1 116,538.6 116.5,539.8 117.1,540.7 117.6,539.1 118.2,539.3 118.7,538.8 119.3,539.6 119.8,540.6 120.4,540.7 120.9,540 121.5,539.1 122,538.8 122.6,540.1 123.1,539.3 123.7,538.3 124.2,538.4 124.8,541 125.3,539.9 125.9,539.8 126.4,538.8 127,539.2 127.5,539.7 128.1,538.6 128.6,538.8 129.2,539.7 129.7,538.7 130.3,539.7 130.8,538.7 131.4,539.7 131.9,538.9 132.5,539.2 133,538.7 133.6,539.3 134.1,539.3 134.7,537.8 135.2,538.3 135.8,539.2 136.3,538.2 136.9,539.8 137.4,538.7 138,538 138.5,539 139.1,537.3 139.6,539.3 140.2,539.6 140.7,538.9 141.3,539.3 141.8,538.8 142.4,540.6 142.9,539.3 143.5,539.4 144.1,537.3 144.6,539.1 145.2,539.5 145.7,540.4 146.3,540 146.8,539.3 147.4,540.3 147.9,538.5 148.5,539.4 149,538.7 149.6,539.8 150.1,538.5 150.7,539 151.2,539.6 151.8,539.5 152.3,539.2 152.9,538.5 153.4,540.3 154,538.4 154.5,540 155.1,537.1 155.6,539.7 156.2,539 156.7,539.2 157.3,539.8 157.8,537.5 158.4,538.5 158.9,538.6 159.5,539 160,539.6 160.6,539.3 161.1,539.1 161.7,538.5 162.2,539 162.8,540.4 163.3,540 163.9,539 164.4,538.5 165,538.2 165.5,540.6 166.1,537.8 166.6,539.2 167.2,539.6 167.7,540.5 168.3,540.8 168.8,540.1 169.4,539.2 169.9,540.1 170.5,539.5 171,540.1 171.6,538.1 172.1,538.5 172.7,539.3 173.2,538.6 173.8,538.9 174.3,539.1 174.9,539.1 175.4,538.6 176,540.7 176.5,539.7 177.1,539.9 177.6,538.9 178.2,538.9 178.7,540 179.3,540.4 179.8,539.2 180.4,537.9 180.9,538.8 181.5,538.8 182,538.3 182.6,539 183.1,540.2 183.7,538.4 184.2,540.2 184.8,539.2 185.3,539.4 185.9,538.8 186.4,540.2 187,540 187.5,538.3 188.1,536.8 188.6,538.2 189.2,540.3 189.7,539.6 190.3,537.7 190.8,539.2 191.4,540.2 191.9,540.6 192.5,541.2 193,539.5 193.6,546.8 194.1,545 194.7,547.4 195.2,546.9 195.8,546.7 196.3,546.1 196.9,547.1 197.4,546.2 198,546 198.5,547 199.1,544.3 199.6,546.5 200.2,547.7 200.7,546.5 201.3,546.6 201.8,546.2 202.4,545 202.9,545.9 203.5,545.5 204,545.3 204.6,544.9 205.1,545.2 205.7,545.7 206.2,545 206.8,538.4 207.3,539 207.9,539.7 208.4,537.2 209,537.4 209.5,538.1 210.1,537.9 210.6,538.3 211.2,537.6 211.7,538.1 212.3,538.5 212.8,538.2 213.4,536.5 213.9,534.5 214.5,531.2 215,529.5 215.6,526.7 216.1,524.6 216.7,524.9 217.2,523.9 217.8,525.6 218.3,524.9 218.9,526.1 219.4,525.5 220,525.8 220.5,525.7 221.1,526.6 221.6,526.3 222.2,527.9 222.7,527.3 223.3,528 223.8,528.6 224.4,529 224.9,529.1 225.5,528.9 226,528.7 226.6,530 227.1,529 227.7,530.3 228.2,531.4 228.8,530.6 229.3,530.7 229.9,532.8 230.4,530.6 231,532.5 231.5,531.8 232.1,532.4 232.6,531.7 233.2,532.6 233.7,533 234.3,533.5 234.8,533.8 235.4,532.4 235.9,533.9 236.5,534.4 237,533.5 237.6,533.6 238.1,533.5 238.7,535.2 239.2,534.7 239.8,536.2 240.3,532.9 240.9,535.4 241.4,534.5 242,535.2 242.5,536.8 243.1,534.8 243.6,536 244.2,535.9 244.7,534.6 245.3,535.9 245.8,535.8 246.4,536.1 246.9,536.9 247.5,536.6 248,536.6 248.6,537.2 249.1,537.3 249.7,537.2 250.2,535.7 250.8,536.8 251.3,537.2 251.9,538 252.4,535.8 253,537.3 253.5,537.4 254.1,537.3 254.6,536.3 255.2,537.1 255.7,538.4 256.3,535.5 256.8,537.7 257.4,537.6 257.9,536.3 258.5,537.1 259,538.3 259.6,538.9 260.1,538.1 260.7,537.5 261.2,538.6 261.8,538 262.3,537.2 262.9,538 263.4,538.5 264,537.6 264.5,537.6 265.1,537.7 265.6,538.1 266.2,538.2 266.7,536.3 267.3,536.9 267.8,537 268.4,538.6 268.9,538.5 269.5,539 270,538.3 270.6,538 271.1,537.2 271.7,538.8 272.2,538.2 272.8,538.8 273.3,537.6 273.9,538.7 274.4,538.9 275,538.8 275.5,536.7 276.1,539.8 276.6,539.3 277.2,539.4 277.7,537.5 278.3,538.5 278.8,538.6 279.4,539.4 279.9,538.8 280.5,539.7 281,538.6 281.6,542.3 282.1,538.4 282.7,538.9 283.2,539.3 283.8,539 284.3,540.8 284.9,539.4 285.4,537.5 286,538.2 286.5,538.5 287.1,539.3 287.6,539.9 288.2,539.7 288.7,538.8 289.3,539.4 289.8,538.3 290.4,539.6 290.9,536.9 291.5,539.9 292,539.5 292.6,539.4 293.1,539 293.7,539 294.2,538.7 294.8,539.6 295.3,538.9 295.9,540.2 296.4,541 297,537.4 297.5,538.1 298.1,538.8 298.6,538.1 299.2,540.2 299.7,540.3 300.3,539.5 300.8,540.3 301.4,539.9 301.9,539.8 302.5,539.9 303,540.1 303.6,540 304.1,539.6 304.7,539.8 305.2,539.2 305.8,539.5 306.3,540.3 306.9,538.9 307.4,539.6 308,539 308.5,539.7 309.1,539.1 309.6,538.8 310.2,539.4 310.7,540.9 311.3,538 311.8,539.2 312.4,539 312.9,540.3 313.5,538.5 314,539.6 314.6,540.3 315.1,539.6 315.7,539.6 316.2,538.6 316.8,539.9 317.3,541 317.9,538.9 318.4,539.5 319,539.9 319.5,540.8 320.1,540.7 320.6,541.2 321.2,539.5 321.7,540.4 322.3,541.6 322.8,540.1 323.4,539.4 323.9,540.3 324.5,540 325,540.2 325.6,539.3 326.1,538 326.7,539.7 327.2,538 327.8,539.7 328.3,539.6 328.9,540.4 329.4,541.4 330,541 330.5,538.8 331.1,539.8 331.6,538.5 332.2,539.6 332.7,539.4 333.3,540.5 333.8,540.4 334.4,540.2 334.9,539.7 335.5,540.8 336,541.1 336.6,538.7 337.1,540 337.7,539.4 338.2,540.2 338.8,540.3 339.3,540 339.9,540 340.4,539.6 341,540.4 341.5,540.3 342.1,541 342.6,540.5 343.2,539.8 343.7,539 344.3,538.8 344.8,540 345.4,540.1 345.9,539.3 346.5,540.9 347,539.9 347.6,540.1 348.1,540.2 348.7,540.4 349.2,539.2 349.8,539.3 350.3,538.9 350.9,539.9 351.4,540 352,539.4 352.5,541.7 353.1,538.8 353.6,540 354.2,539.2 354.7,540 355.3,540.2 355.8,539.5 356.4,538.6 356.9,539.2 357.5,539.7 358,539.9 358.6,541.1 359.1,540.1 359.7,539.9 360.2,539.9 360.8,538.2 361.3,540.5 361.9,539.6 362.4,539.2 363,539.2 363.5,538.6 364.1,540.3 364.6,538.9 365.2,540.5 365.7,539.5 366.3,539.7 366.8,541.1 367.4,540.3 367.9,539.2 368.5,540.7 369,540.6 369.6,541.8 370.1,540.9 370.7,539.2 371.2,540.7 371.8,540.5 372.3,539.4 372.9,539.4 373.4,539.6 374,539.5 374.5,540.7 375.1,541.4 375.6,539.3 376.2,539.5 376.7,540.1 377.3,539.8 377.8,539.8 378.4,540.1 378.9,540.5 379.5,539.2 380,539.4 380.6,541.1 381.1,538.7 381.7,540.1 382.2,539.2 382.8,541.2 383.3,539.9 383.9,540.5 384.4,542.1 385,540.7 385.5,539.9 386.1,540.3 386.6,540 387.2,539.3 387.7,539.8 388.3,540.8 388.8,541.1 389.4,539.9 389.9,539.1 390.5,540.4 391,540.9 391.6,541.2 392.1,540.4 392.7,540.8 393.2,540.6 393.8,540.6 394.3,540.3 394.9,540.6 395.4,540.3 396,540.4 396.5,539.6 397.1,540 397.6,541.2 398.2,539.9 398.7,540.6 399.3,540.5 399.8,540 400.4,539.3 400.9,540.5 401.5,542 402,539.6 402.6,540.3 403.1,540.6 403.7,538.4 404.2,539.2 404.8,540.5 405.3,540.2 405.9,541.2 406.4,539.6 407,538.7 407.5,539.4 408.1,540.2 408.6,538.9 409.2,540.7 409.7,540.1 410.3,540.8 410.8,539.1 411.4,540.7 411.9,539.3 412.5,539 413,540.3 413.6,540 414.1,540.4 414.7,538.3 415.2,539.2 415.8,539.6 416.3,539.2 416.9,539 417.4,540.6 418,539.9 418.5,540.1 419.1,539.7 419.6,540.6 420.2,542 420.7,539.3 421.3,539.3 421.8,539.8 422.4,540.8 422.9,542 423.5,540 424,540.3 424.6,539.9 425.1,539.3 425.7,539.1 426.2,539.4 426.8,538.8 427.3,541.3 427.9,540 428.4,538.8 429,540.3 429.5,539.3 430.1,538.1 430.6,540.5 431.2,538.8 431.7,539.7 432.3,541.6 432.8,541.5 433.4,540.8 433.9,541 434.5,540.3 435,540.6 435.6,540.3 436.1,540.4 436.7,539.7 437.2,540.3 437.8,540.8 438.3,539.3 438.9,538.2 439.4,539.1 440,539.8 440.5,540.1 441.1,540.4 441.6,540.4 442.2,540.3 442.7,539.1 443.3,540.2 443.8,539.9 444.4,539.5 444.9,540 445.5,539.6 446,539.4 446.6,540.1 447.1,541.2 447.7,540.1 448.2,541.7 448.8,540 449.3,541 449.9,540 450.4,541.2 451,540.3 451.5,540.5 452.1,539.5 452.6,540.1 453.2,539.6 453.7,538.8 454.3,539.6 454.8,539.4 455.4,540.6 455.9,541.2 456.5,539.9 457,539.8 457.6,540.7 458.1,540.1 458.7,539.9 459.2,539.9 459.8,538.4 460.3,540.5 460.9,540.3 461.4,539.3 462,539.4 462.5,539.9 463.1,539.6 463.6,540.1 464.2,538 464.7,539.7 465.3,539.5 465.8,539.5 466.4,539.9 466.9,539.8 467.5,540.8 468,539.5 468.6,540.4 469.1,540.9 469.7,539.4 470.2,542 470.8,539.3 471.3,541 471.9,540.7 472.4,540.2 473,540.1 473.5,540.4 474.1,540 474.6,541.3 475.2,540.2 475.7,540.2 476.3,540.3 476.8,542.1 477.4,539.1 477.9,539.3 478.5,538.1 479,541.2 479.6,541.2 480.1,538.6 480.7,539 481.2,539.3 481.8,541.8 482.3,541.1 482.9,541.8 483.4,540.8 484,541.2 484.5,539.5 485.1,540.3 485.6,539.9 486.2,541.1 486.7,538.9 487.3,537.9 487.8,539.8 488.4,540.8 488.9,539.7 489.5,539.2 490,540.1 490.6,540.1 491.1,538.9 491.7,537.8 492.2,540.7 492.8,539.4 493.3,540.5 493.9,539 494.4,540.9 495,540.6 495.5,540.1 496.1,538.4 496.6,539.7 497.2,539.3 497.7,540.1 498.3,540.3 498.8,540.2 499.4,541.1 499.9,539.2 500.5,540 501,540.3 501.6,540.5 502.1,539.4 502.7,539.8 503.2,542.6 503.8,540.8 504.3,539.2 504.9,539.1 505.4,538.7 506,540.8 506.5,539.2 507.1,539.7 507.6,540 508.2,540.4 508.7,539.8 509.3,539.8 509.8,539.6 510.4,540.1 510.9,538.3 511.5,541.9 512,542.4 512.6,539.5 513.1,541.2 513.7,539.8 514.2,541.1 514.8,541.7 515.3,540.7 515.9,540.2 516.4,542.7 517,539.3 517.5,540.3 518.1,540.1 518.6,541.1 519.2,539.7 519.7,540.1 520.3,539.7 520.8,540.7 521.4,540.7 521.9,542.5 522.5,541 523,542.5 523.6,541.3 524.1,540.6 524.7,540.7 525.2,540.7 525.8,539.2 526.3,540.5 526.9,539.3 527.4,540.1 528,540.3 528.5,541 529.1,541.3 529.6,540.4 530.2,540.6 530.7,540.5 531.3,540.9 531.8,543.4 532.4,541.5 532.9,540.3 533.5,539.8 534,539.6 534.6,540.3 535.1,539.5 535.7,540.6 536.2,540.5 536.8,540 537.3,539.2 537.9,540.1 538.4,540.7 539,540.7 539.5,539.7 540.1,539.9 540.6,538.3 541.2,539.6 541.7,540.1 542.3,539.6 542.8,539.8 543.4,541.2 543.9,540.1 544.5,540.8 545,541.4 545.6,539.4 546.1,540.1 546.7,542.1 547.2,540 547.8,540.1 548.3,539.7 548.9,540.1 549.4,540.5 550,539.6 550.5,540.1 551.1,539.8 551.6,539.2 552.2,540.1 552.7,542 553.3,540.4 553.8,540.6 554.4,538.7 554.9,540.1 555.5,539.5 556,539.6 556.6,540.2 557.1,540.5 557.7,540.4 558.2,539 558.8,539.4 559.3,540.8 559.9,539.5 560.4,539.7 561,539.4 561.5,541.2 562.1,540.2 562.6,539.9 563.2,541 563.7,540.1 564.3,540.8 564.8,540.7 565.4,538.5 565.9,541 566.5,540.4 567,540.1 567.6,540.9 568.1,539.8 568.7,540 569.2,540.5 569.8,540.2 570.3,541.1 570.9,539.7 571.4,540.2 572,540 572.5,539.8 573.1,539.6 573.6,539.7 574.2,539.7 574.7,540.7 575.3,539.9 575.8,540.8 576.4,540.8 576.9,540 577.5,540.9 578,540.4 578.6,540.4 579.1,540.9 579.7,540.6 580.2,539.9 580.8,539.6 581.3,539 581.9,541.3 582.4,540.2 583,539.9 583.5,538.2 584.1,539.5 584.6,541.1 585.2,541.7 585.7,539.9 586.3,540.8 586.8,541.5 587.4,542.3 587.9,539.3 588.5,541.1 589,539.3 589.6,538.5 590.1,540.4 590.7,540.5 591.2,540.3 591.8,539.8 592.3,540.7 592.9,540.1 593.4,539.9 594,539.4 594.5,539.7 595.1,540 595.6,541 596.2,541.3 596.7,541.2 597.3,541 597.8,539.7 598.4,540.7 598.9,540 599.5,540 600,539.6 600.6,540.5 601.1,539.4 601.7,540.4 602.2,539.1 602.8,541.8 603.3,539.2 603.9,541.9 604.4,540.7 604.9,540.2 605.5,539.5 606,540 606.6,540.7 607.1,539 607.7,541.2 608.2,539.2 608.8,540.7 609.3,540.5 609.9,538.7 610.4,539.4 611,539.1 611.5,540.5 612.1,538.7 612.6,539.8 613.2,541.5 613.7,539.9 614.3,541 614.8,539.4 615.4,540.7 615.9,539.6 616.5,539.2 617,540 617.6,539.4 618.1,539.4 618.7,540 619.2,539.9 619.8,540.8 620.3,541.2 620.9,540.3 621.4,540.1 622,538.7 622.5,539.5 623.1,540.4 623.6,540.5 624.2,538.4 624.7,540 625.3,540.6 625.8,537.8 626.4,539.7 626.9,539.9 627.5,541.1 628,540.3 628.6,540.6 629.1,538.6 629.7,538.4 630.2,539.2 630.8,540.1 631.3,540.3 631.9,539.5 632.4,541.6 633,538.6 633.5,539 634.1,540.1 634.6,540.8 635.2,539.5 635.7,541.5 636.3,540.1 636.8,540.6 637.4,540.7 637.9,540 638.5,539.4 639,538.8 639.6,540.9 640.1,539.6 640.7,539.7 641.2,539.9 641.8,540.4 642.3,540.5 642.9,539.3 643.4,539.8 644,539.7 644.5,540.5 645.1,539.5 645.6,539.8 646.2,540.8 646.7,539.2 647.3,539.4 647.8,539.6 648.4,539.4 648.9,540.6 649.5,540 650,539.8 650.6,540.1 651.1,539.9 651.7,541.3 652.2,540.2 652.8,540.2 653.3,542.1 653.9,540.1 654.4,540.4 655,540 655.5,539.5 656.1,540.3 656.6,538.6 657.2,540.1 657.7,540.3 658.3,539.6 658.8,540.7 659.4,540.1 659.9,541.6 660.5,540.3 661,540.4 661.6,538.9 662.1,539.9 662.7,540.8 663.2,541.1 663.8,541 664.3,539.8 664.9,538.4 665.4,539.9 666,540.4 666.5,540 667.1,541.3 667.6,539.2 668.2,542.1 668.7,539.9 669.3,540.1 669.8,539.8 670.4,540.1 670.9,539.8 671.5,539.6 672,540.8 672.6,539.5 673.1,539.5 673.7,539.4 674.2,538.8 674.8,540.8 675.3,541.8 675.9,540.3 676.4,540.5 677,540 677.5,542 678.1,541 678.6,540.7 679.2,539.2 679.7,541.3 680.3,540.7 680.8,539.8 681.4,540.7 681.9,540.9 682.5,538.9 683,539.7 683.6,539.4 684.1,539.6 684.7,540.6 685.2,540.5 685.8,540.7 686.3,540.3 686.9,539.8 687.4,540.2 688,538.6 688.5,540.4 689.1,538.9 689.6,540.2 690.2,540 690.7,541.2 691.3,540.2 691.8,539.5 692.4,539.9 692.9,541.1 693.5,539.9 694,541.5 694.6,540 695.1,540.6 695.7,540.5 696.2,539.9 696.8,540.1 697.3,539.4 697.9,539.8 698.4,540.8 699,541.9 699.5,539.6 700.1,539.7 700.6,540.1 701.2,540.4 701.7,541.5 702.3,540.8 702.8,540.9 703.4,540.6 703.9,539.4 704.5,541.1 705,540.3 705.6,541.4 706.1,540.3 706.7,539.1 707.2,540.5 707.8,540.4 708.3,540.6 708.9,541 709.4,540.5 710,539.1 710.5,539.9 711.1,539.9 711.6,539.9 712.2,539.6 712.7,541.1 713.3,539.4 713.8,540.9 714.4,539.1 714.9,539.9 715.5,540 716,539 716.6,538.4 717.1,539.5 717.7,539.6 718.2,540.3 718.8,540.5 719.3,541.3 719.9,539.8 720.4,539.7 721,540.2 721.5,540.9 722.1,540 722.6,538.5 723.2,539.5 723.7,538.9 724.3,538.7 724.8,540 725.4,541 725.9,539.9 726.5,538.2 727,539.6 727.6,540.7 728.1,540.5 728.7,540.3 729.2,540.2 729.8,539.7 730.3,540.2 730.9,542 731.4,541.3 732,540 732.5,539.4 733.1,541.3 733.6,538.9 734.2,540 734.7,539.3 735.3,539.7 735.8,541.5 736.4,540.5 736.9,541 737.5,539.8 738,540.1 738.6,541.5 739.1,539.5 739.7,539.6 740.2,539.8 740.8,538.8 741.3,540.9 741.9,543.1 742.4,540.4 743,539.4 743.5,540.6 744.1,538.9 744.6,542.3 745.2,540 745.7,540.5 746.3,540.6 746.8,539 747.4,540.7 747.9,539.9 748.5,540.2 749,540.7 749.6,539.3 750.1,539.2 750.7,542.2 751.2,541 751.8,539.7 752.3,539.9 752.9,540.4 753.4,539.9 754,539.8 754.5,540 755.1,540.2 755.6,542.9 756.2,539 756.7,540 757.3,539.9 757.8,540.2 758.4,541 758.9,540 759.5,540.2 760,541.9 760.6,539.2 761.1,540.4 761.7,540.7 762.2,540.4 762.8,538.4 763.3,539.5 763.9,539.8 764.4,539.9 765,540.8 765.5,540 766.1,540.3 766.6,539.9 767.2,538.7 767.7,540.7 768.3,540.3 768.8,540.1 769.4,539.9 769.9,541 770.5,538.9 771,540.2 771.6,539.9 772.1,540.4 772.7,540.9 773.2,539.3 773.8,539.5 774.3,541.2 774.9,541.4 775.4,540.5 776,539.1 776.5,540.1 777.1,541.8 777.6,540.2 778.2,541.1 778.7,540.5 779.3,540.5 779.8,540.3 780.4,541.3 780.9,540.8 781.5,539.3 782,539.6 782.6,539.5 783.1,541.2 783.7,540.2 784.2,538.8 784.8,540.9 785.3,540 785.9,541.2 786.4,540 787,540.5 787.5,540 788.1,541.8 788.6,539.9 789.2,539.6 789.7,540 790.3,539.1 790.8,539.3 791.4,540.9 791.9,539.1 792.5,539.9 793,539.3 793.6,541.5 794.1,539.3 794.7,540.1 795.2,541.6 795.8,539.8 796.3,539.5 796.9,540.7 797.4,539.7 798,540.3 798.5,540.1 799.1,539.7 799.6,540.6 800.2,540.7 800.7,539.5 801.3,538.4 801.8,540.3 802.4,539.3 802.9,540.6 803.5,540.7 804,541.1 804.6,538.7 805.1,539.4 805.7,539.3 806.2,541.1 806.8,541.7 807.3,537.5 807.9,540.4 808.4,539.9 809,539.4 809.5,541.1 810.1,539.2 810.6,540.7 811.2,539.3 811.7,541.5 812.3,540 812.8,540 813.4,539.1 813.9,540.3 814.5,541.5 815,541.3 815.6,540.6 816.1,540.1 816.7,537.8 817.2,539.4 817.8,540.4 818.3,540 818.9,541.4 819.4,540 820,540.3 820.5,540.2 821.1,540.1 821.6,539.9 822.2,540 822.7,540.8 823.3,540.1 823.8,539.5 824.4,539.8 824.9,540.4 825.5,540.6 826,538.6 826.6,537.9 827.1,540.1 827.7,541.5 828.2,541.6 828.8,540.3 829.3,540 829.9,539.5 830.4,539.3 831,541.3 831.5,540.1 832.1,538.1 832.6,538.8 833.2,540.1 833.7,539.4 834.3,539.1 834.8,539.9 835.4,539.5 835.9,539.4 836.5,539.9 837,541.7 837.6,539.3 838.1,540 838.7,540.9 839.2,539.7 839.8,540.3 840.3,539.6 840.9,539.1 841.4,540.4 842,533.3 842.5,532.9 843.1,540.3 843.6,539.7 844.2,540.7 844.7,540.5 845.3,539.8 845.8,540.2 846.4,539.8 846.9,539.3 847.5,540.1 848,539.7 848.6,539.6 849.1,540 849.7,540 850.2,540.2 850.8,540.5 851.3,540.3 851.9,539.8 852.4,540.6 853,539.1 853.5,539 854.1,540.4 854.6,540.1 855.2,541.3 855.7,540.4 856.3,539.6 856.8,539.7 857.4,540.8 857.9,540.9 858.5,539.9 859,540 859.6,540.8 860.1,540.5 860.7,541.1 861.2,539.7 861.8,538.5 862.3,539.4 862.9,541.8 863.4,540.1 864,540.6 864.5,539.1 865.1,541.2 865.6,540.4 866.2,540.1 866.7,539 867.3,541.2 867.8,541.6 868.4,539.3 868.9,541.4 869.5,540.3 870,540.5 870.6,540.6 871.1,540.9 871.7,539.9 872.2,540.6 872.8,540.2 873.3,540 873.9,539.2 874.4,540.5 875,540.4 875.5,541.2 876.1,540 876.6,539.7 877.2,539 877.7,540.4 878.3,540.4 878.8,540.1 879.4,540.6 879.9,540.2 880.5,540.6 881,542.1 881.6,540 882.1,539.6 882.7,540.3 883.2,539.8 883.8,541.7 884.3,539.3 884.9,539 885.4,540.1 886,540.4 886.5,541.5 887.1,540.2 887.6,540.4 888.2,540.8 888.7,539.9 889.3,541 889.8,540.2 890.4,540.5 890.9,540.8 891.5,540.4 892,539 892.6,540.1 893.1,541 893.7,539.8 894.2,539.6 894.8,540.4 895.3,540.6 895.9,540.2 896.4,540.5 897,539.9 897.5,540.2 898.1,540.4 898.6,542.2 899.2,540.1 899.7,539.2 900.3,538.6 900.8,540.2 901.4,540.4 901.9,540.3 902.5,540.4 903,540.4 903.6,540.6 904.1,540.1 904.7,540.4 905.2,540.7 905.8,539.9 906.3,540.4 906.9,540 907.4,539.3 908,539.3 908.5,540.7 909.1,539.9 909.6,539.8 910.2,539.3 910.7,540.9 911.3,540.7 911.8,539.9 912.4,539.7 912.9,540.2 913.5,540.8 914,540.7 914.6,539.7 915.1,540.2 915.7,539.8 916.2,540.5 916.8,540.5 917.3,540.5 917.9,540.2 918.4,540 919,540.3 919.5,539.2 920.1,540.1 920.6,541 921.2,540.9 921.7,540.7 922.3,540.2 922.8,540.6 923.4,542.5 923.9,540.4 924.5,541.7 925,540.7 925.6,539.4 926.1,540.9 926.7,539.6 927.2,540.1 927.8,540.6 928.3,541.7 928.9,540.2 929.4,541.7 930,541.1 930.5,539.4 931.1,539.1 931.6,539.1 932.2,540 932.7,539.4 933.3,539.5 933.8,539 934.4,541.6 934.9,539.5 935.5,540.4 936,539.2 936.6,540.4 937.1,538.6 937.7,538.3 938.2,539.7 938.8,540.2 939.3,539.5 939.9,540.4 940.4,540.9 941,541.1 941.5,539.5 942.1,540.4 942.6,538.8 943.2,541.9 943.7,539.4 944.3,539.3 944.8,538.7 945.4,539.8 945.9,541.1 946.5,539.3 947,540.2 947.6,539.8 948.1,540 948.7,540.8 949.2,540.2 949.8,540.7 950.3,539.6 950.9,540.3 951.4,541.1 952,539.6 952.5,540.5 953.1,539.3 953.6,541.2 954.2,539.9 954.7,540.7 955.3,538.9 955.8,539.2 956.4,541.6 956.9,540.2 957.5,539.1 958,539.7 958.6,541.3 959.1,540 959.7,540.9 960.2,541 960.8,539.4 961.3,540 961.9,539.7 962.4,541.2 963,540.2 963.5,539.9 964.1,540 964.6,540 965.2,540.6 965.7,540.6 966.3,540.7 966.8,540.9 967.4,540 967.9,540.1 968.5,540.7 969,541.7 969.6,540.6 970.1,541 970.7,541.9 971.2,541.4 971.8,540.5 972.3,539 972.9,539.8 973.4,539 974,538.9 974.5,539.5 975.1,540.7 975.6,540.8 976.2,540.1 976.7,541.4 977.3,540.2 977.8,539.4 978.4,540.8 978.9,539.6 979.5,539.2 980,540.7 980.6,540.3 981.1,539.3 981.7,539.5 982.2,539.5 982.8,540.3 983.3,540 983.9,539.3 984.4,539.9 985,540.9 985.5,539.6 986.1,541.3 986.6,541.4 987.2,540.6 987.7,540.6 988.3,539 988.8,539.3 989.4,540.5 989.9,539.9 990.5,540.1 991,539.7 991.6,540.5 992.1,538.7 992.7,539.3 993.2,541.4 993.8,540 994.3,539.3 994.9,540.4 995.4,539.6 996,539.6 996.5,539.2 997.1,539.9 997.6,541.5 998.2,540.8 998.7,541 999.3,541.4 999.8,539.1 1000.4,539.2 1000.9,538.9 1001.5,539.8 1002,540.4 1002.6,539.1 1003.1,540 1003.7,539.5 1004.2,539.4 1004.8,541.4 1005.3,542.2 1005.9,539.3 1006.4,540.4 1007,539.9 1007.5,540 1008.1,539.5 1008.6,540.2 1009.2,539.6 1009.7,540 1010.3,539.7 1010.8,542.1 1011.4,540.2 1011.9,540.6 1012.5,538.8 1013,540.3 1013.6,539.1 1014.1,540 1014.7,541.5 1015.2,540.1 1015.8,540.4 1016.3,540.1 1016.9,539 1017.4,540.4 1018,539.8 1018.5,540.5 1019.1,540.5 1019.6,541.2 1020.2,540.5 1020.7,541.2 1021.3,539 1021.8,539.7 1022.4,541.7 1022.9,539.6 1023.5,542 1024,540.3 1024.6,540 1025.1,540.8 1025.7,539.3 1026.2,540.1 1026.8,541.3 1027.3,540.3 1027.9,540.5 1028.4,539.5 1029,540.7 1029.5,540.4 1030.1,541.5 1030.6,539.9 1031.2,539.6 1031.7,540.6 1032.3,540.3 1032.8,540.7 1033.4,540.3 1033.9,538.9 1034.5,539.7 1035,540.3 1035.6,539.9 1036.1,540.1 1036.7,541.2 1037.2,540.8 1037.8,541.4 1038.3,539.3 1038.9,538.9 1039.4,538.7 1040,539.8 1040.5,540.3 1041.1,548.3 1041.6,548.7 1042.2,549.1 1042.7,546.9 1043.3,548.1 1043.8,548.4 1044.4,547.1 1044.9,546.4 1045.5,547.7 1046,547.5 1046.6,548.8 1047.1,545.2 1047.7,544 1048.2,545.5 1048.8,547.1 1049.3,546.2 1049.9,548.7 1050.4,545.6 1051,544.3 1051.5,546.1 1052.1,545.9 1052.6,545.7 1053.2,544.9 1053.7,509.3 1054.3,510.1 1054.8,507.9 1055.4,507.2 1055.9,505.6 1056.5,506.9 1057,506.8 1057.6,507.3 1058.1,507.1 1058.7,505.7 1059.2,505.4 1059.8,505.1 1060.3,501.7 1060.9,500.4 1061.4,497.9 1062,498.6 1062.5,499.5 1063.1,497.4 1063.6,496.9 1064.2,499.3 1064.7,499.5 1065.3,503.1 1065.8,502 1066.4,501.4 1066.9,502.3 1067.5,505.4 1068,505.1 1068.6,505.8 1069.1,505.6 1069.7,506.3 1070.2,506.4 1070.8,507.3 1071.3,508.2 1071.9,507.3 1072.4,507.3 1073,510.4 1073.5,509.5 1074.1,509.7 1074.6,510.3 1075.2,511.1 1075.7,510.5 1076.3,512.2 1076.8,510.6 1077.4,512 1077.9,511.4 1078.5,510.3 1079,512 1079.6,512.2 1080.1,512.2 1080.7,514.1 1081.2,511.9 1081.8,513.6 1082.3,512.2 1082.9,515.3 1083.4,515.4 1084,515.3 1084.5,516.1 1085.1,513.7 1085.6,516.5 1086.2,514.4 1086.7,514.4 1087.3,516.6 1087.8,514.6 1088.4,516 1088.9,516 1089.5,515.5 1090,515.5 1090.6,514.8 1091.1,517 1091.7,516.5 1092.2,516.3 1092.8,517.4 1093.3,516.4 1093.9,516.1 1094.4,518.1 1095,517 1095.5,518.1 1096.1,518 1096.6,517.9 1097.2,518.4 1097.7,518.6 1098.3,517.3 1098.8,519 1099.4,518.5 1099.9,518.6 1100.5,519.3 1101,518.6 1101.6,519 1102.1,518.4 1102.7,519.5 1103.2,519.5 1103.8,518.3 1104.3,520.3 1104.9,519.6 1105.4,520.3 1106,519.3 1106.5,520.1 1107.1,519.8 1107.6,520.9 1108.2,519.3 1108.7,519.9 1109.3,521.8 1109.8,519 1110.4,520 1110.9,521.3 1111.5,521.2 1112,521.1 1112.6,522.2 1113.1,519.6 1113.7,522 1114.2,520.9 1114.8,522.8 1115.3,521 1115.9,521.6 1116.4,521.2 1117,522.2 1117.5,523.9 1118.1,523 1118.6,522 1119.2,522.2 1119.7,521.3 1120.3,521.4 1120.8,521.7 1121.4,523.6 1121.9,522.1 1122.5,523 1123,522.4 1123.6,523" fill="none" stroke="#00f6fc" stroke-width="1.95" stroke-linejoin="round"/>
<polyline points="67.6,359.1 68.2,357.5 68.8,356.9 69.4,357.4 70,357.4 70.6,357.1 71.2,357.3 71.8,357.3 72.4,356.5 73,357.5 73.6,357.9 74.2,357.1 74.8,357.6 75.4,357.2 76,357.2 76.6,357.3 77.2,357.3 77.8,356.6 78.4,357.5 79,357.3 79.6,357.6 80.2,357.7 80.8,357.8 81.4,357.7 82,357.4 82.6,356.8 83.2,357.5 83.8,358.2 84.4,356.2 85,357.2 85.6,357.4 86.2,357.8 86.8,357.3 87.4,357.7 88,356.9 88.6,357.6 89.2,356.6 89.8,357.3 90.4,358.1 91,358.4 91.6,357.9 92.2,357.7 92.8,358.1 93.4,356.9 94,358.7 94.6,357.1 95.2,357 95.8,356.8 96.4,357.5 97,357.8 97.6,356.9 98.2,357.5 98.8,357.3 99.4,357.1 100,357.5 100.6,357.2 101.2,356.8 101.8,358.1 102.4,357.3 103,356.2 103.6,357.2 104.2,356.7 104.8,357.4 105.4,356.8 106,358.1 106.6,357 107.2,356.5 107.8,357.9 108.4,357.8 109,357.4 109.6,357.7 110.2,356.6 110.8,358.1 111.4,357.9 112,357.5 112.6,358.4 113.2,357.6 113.8,357.2 114.4,357.3 115,357.7 115.6,357.5 116.2,358.1 116.8,354.8 117.4,357.6 118,357.2 118.6,357.1 119.2,357.8 119.8,357.5 120.4,357.4 121,356.7 121.6,356.7 122.2,357.2 122.8,356.8 123.4,356.1 124,357 124.6,357.3 125.2,358.3 125.8,357 126.4,357.1 127,357.4 127.6,356.9 128.2,357 128.8,357.2 129.4,357.9 130,357.8 130.6,356.7 131.2,358.4 131.8,356.9 132.4,357.3 133,357.4 133.6,357.6 134.2,359.3 134.8,357.1 135.4,357 136,355.9 136.6,358.1 137.2,358.1 137.8,357.1 138.4,357.7 139,357.3 139.6,357.4 140.2,357.1 140.8,356.2 141.4,357.2 142,357.5 142.6,357.1 143.2,357.4 143.8,356.3 144.4,357.6 145,357.1 145.6,356.6 146.2,357.2 146.8,357.5 147.4,357.6 148,357.2 148.6,357.1 149.2,358.1 149.8,357.3 150.4,356.4 151,357.1 151.6,359.3 152.2,357 152.8,356.7 153.4,357.6 154,356.6 154.6,356.5 155.2,358 155.8,357.8 156.4,356.9 157,358.5 157.6,356.8 158.2,357.4 158.8,357.6 159.4,357 160,357.5 160.6,357.9 161.2,357 161.8,357.3 162.4,357.2 163,356.8 163.6,355.9 164.2,357.2 164.8,356.2 165.4,357.3 166,357.3 166.6,355.5 167.2,356.9 167.8,357.9 168.4,356.5 169,356.9 169.6,357.7 170.2,357.5 170.8,358.5 171.4,358 172,356.7 172.6,357.9 173.2,355.7 173.8,357.5 174.4,356.9 175,357.5 175.6,357.1 176.2,357.5 176.8,356.8 177.4,357.5 178,357.1 178.6,358.9 179.2,356.6 179.8,356.7 180.4,357.4 181,356 181.6,355.7 182.2,357.5 182.8,357.4 183.4,356.8 184,357.4 184.6,357 185.2,358 185.8,358 186.4,356.8 187,357.1 187.6,357.2 188.2,356.7 188.8,357.2 189.4,357.1 190,357 190.6,358.1 191.2,357.1 191.8,358 192.4,357.5 193,357.1 193.6,357.4 194.2,357.4 194.8,356.8 195.4,357.4 196,356.9 196.6,356.8 197.2,357.5 197.8,357.4 198.4,357.5 199,357.3 199.6,357.5 200.2,357.6 200.8,357.8 201.4,356.7 202,356.1 202.6,356.4 203.2,355.1 203.8,356.2 204.4,356.2 205,357 205.6,355 206.2,355.4 206.8,357.2 207.4,356.6 208,357.6 208.6,356.7 209.2,357.6 209.8,357.8 210.4,357.3 211,357.3 211.6,357.7 212.2,356.3 212.8,356.6 213.4,357.1 214,356.4 214.6,357.2 215.2,357 215.8,357.5 216.4,357.4 217,357.7 217.6,357.8 218.2,356.8 218.8,358.1 219,357 219,246.5 219.7,246.5 219.7,225.8 219.4,226.2 220,227.2 220.6,226.8 221.2,227 221.8,226.4 222.4,226.8 223,227.4 223.6,226.7 224.2,227 224.8,227.5 225.4,227.6 226,227.2 226.6,226.4 227.2,227.3 227.8,226.6 228.4,227 229,227.9 229.6,226.8 230.2,226 230.8,225.9 231.4,226.6 232,227.5 232.6,227.1 233.2,226.7 233.8,227 234.4,226.1 235,227.5 235.6,226.6 236.2,227.7 236.8,229.3 237.4,226.4 238,228.4 238.6,227.5 239.2,226.5 239.8,226.2 240.4,227.3 241,226.4 241.6,227.2 242.2,226.4 242.8,226.7 243.4,226.2 244,227.5 244.6,227.1 245.2,227.2 245.8,227.9 246.4,227.8 247,227.2 247.6,227.3 248.2,229.3 248.8,227.6 249.4,227.7 250,227.4 250.6,226.1 251.2,226.8 251.8,226.7 252.4,226.5 253,227 253.6,227.3 254.2,227.6 254.8,227.5 255.4,227.9 256,227 256.6,226.9 257.2,227.1 257.8,227.4 258.4,228.5 259,226.9 259.6,227.9 260.2,225.8 260.8,227.6 261.4,226.5 262,226.7 262.6,226.8 263.2,226.8 263.8,226.7 264.4,226.8 265,226.5 265.6,226.2 266.2,228.1 266.8,226.5 267.4,226.6 268,227.3 268.6,227.1 269.2,225.9 269.8,226.6 270.4,226.4 271,226.6 271.6,226.6 272.2,226.6 272.8,228 273.4,226.8 274,226.5 274.6,227.4 275.2,226.4 275.8,227.6 276.4,227.3 277,227.6 277.6,227.5 278.2,226.8 278.8,227.7 279.4,225.9 280,226.8 280.6,226.7 281.2,227.3 281.8,227.4 282.4,226.8 283,226.8 283.6,226.2 284.2,227.4 284.8,226.6 285.4,229 286,227.5 286.6,226.2 287.2,227.7 287.8,224.4 288.4,226.8 289,227.4 289.6,226.9 290.2,226.7 290.8,226.3 291.4,227.5 292,227.6 292.6,226.3 293.2,226.8 293.8,225.8 294.4,227 295,227 295.6,228 296.2,226.9 296.8,226 297.4,226.6 298,226.9 298.6,226.4 299.2,226 299.8,227.4 300.4,225.5 301,226.5 301.6,226.2 302.2,227.2 302.8,227.3 303.4,226.3 304,227.3 304.6,227.4 305.2,227.8 305.8,227.1 306.4,226.8 307,226.3 307.6,225.9 308.2,227.4 308.8,226.6 309.4,227.6 310,226.5 310.6,227.2 311.2,228.1 311.8,226.9 312.4,227.1 313,226.6 313.6,226.1 314.2,227.4 314.8,227.1 315.4,226.8 316,227.1 316.6,227.1 317.2,227.5 317.8,227 318.4,226.8 319,226.6 319.6,226.2 320.2,226.5 320.8,226.7 321.4,227.1 322,226.6 322.6,226 323.2,226.3 323.8,227.3 324.4,227.9 325,227.5 325.6,227.4 326.2,226.3 326.8,227.4 327.4,227.6 328,226.8 328.6,226.7 329.2,226.1 329.8,226.8 330.4,227.1 331,226 331.6,226.3 332.2,226.2 332.8,226.5 333.4,227 334,226.8 334.6,226.8 335.2,226.4 335.8,227.3 336.4,227.1 337,226.8 337.6,226.4 338.2,226.2 338.8,227 339.4,226.9 340,227 340.6,227.5 341.2,227.2 341.8,225.5 342.4,226.7 343,226.6 343.6,227.3 344.2,224.5 344.8,226.9 345.4,226.8 346,225.8 346.6,227 347.2,226.8 347.8,227 348.4,227.3 349,226.8 349.6,227.4 350.2,226.6 350.8,226 351.4,226.4 352,226.7 352.6,228.2 353.2,226.4 353.8,226.9 354.4,227 355,227 355.6,226.7 356.2,227.1 356.8,227.6 357.4,226.5 358,228 358.6,227.2 359.2,227.3 359.8,226.6 360.4,227.9 361,227.7 361.6,227.2 362.2,227.2 362.8,226.7 363.4,225.9 364,227.4 364.6,226.9 365.2,227.1 365.8,226.9 366.4,228 367,227.5 367.6,227.5 368.2,227.4 368.8,227.7 369.4,225.9 370,226.2 370.6,227.3 371.2,226.6 371.8,227.1 371.8,358.3 371.8,356.8 372.4,357.2 373,357.7 373.6,357.7 374.2,356.7 374.8,358.3 375.4,357.6 376,357.9 376.6,357 377.2,356.4 377.8,357.9 378.4,357 379,356.6 379.6,357.8 380.2,357.3 380.8,356.9 381.4,357.1 382,357.8 382.6,357.4 383.2,357.7 383.8,357 384.4,356.6 385,359.2 385.6,357.5 386.2,358.3 386.8,357.1 387.4,358.1 388,357.9 388.6,357 389.2,357.6 389.8,358.1 390.4,356.6 391,356.9 391.6,357.5 392.2,357.5 392.8,357.7 393.4,356.8 394,358.2 394.6,357.6 395.2,358.2 395.8,357.8 396.4,357 397,357.3 397.6,357.4 398.2,357.8 398.8,357.3 399.4,357 400,358.1 400.6,357.3 401.2,357.5 401.8,357.3 402.4,357.9 403,357.8 403.6,357.8 404.2,357.8 404.8,357.6 405.4,357.6 406,357.2 406.6,357.4 407.2,358.4 407.8,357.1 408.4,357.2 409,356.9 409.6,357.8 410.2,357.3 410.8,356.8 411.4,356.7 412,355.4 412.6,356.4 413.2,356 413.8,354.5 414.4,356.7 415,355.9 415.6,355.8 416.2,356.9 416.2,369 416.4,357.3 416.8,357.7 417.4,357.1 418,356.7 418.6,356.7 419.2,357.3 419.8,357.6 420.4,358.4 421,356.8 421.6,356.8 422.2,357.8 422.8,357.2 423.4,356.8 424,357.2 424.6,357 425.2,357.8 425.8,357 426.4,357.5 427,356.8 427.6,357.5 428.2,356.3 428.8,357.6 429.4,357.7 430,357.4 430.6,357 431.2,356.7 431.5,357 431.5,246.5 432.2,246.5 432.2,225.8 431.8,226.3 432.4,226.1 433,227.3 433.6,227.4 434.2,226.5 434.8,227.4 435.4,226.6 436,226.6 436.6,226.1 437.2,226.6 437.8,226.9 438.4,227.4 439,226.8 439.6,226.3 440.2,227.2 440.8,226.1 441.4,228.1 442,227.1 442.6,226.7 443.2,227.9 443.8,226.7 444.4,226.8 445,227.2 445.6,226.1 446.2,227.1 446.8,229.2 447.4,226.9 448,227.9 448.6,226.6 449.2,228 449.8,227.4 450.4,226.8 451,227.7 451.6,226.4 452.2,227.9 452.8,227.5 453.4,227 454,226.6 454.6,226.9 455.2,226.2 455.8,226.6 456.4,227.7 457,226.6 457.6,226.3 458.2,227.3 458.8,226.6 459.4,227.7 460,227 460.6,226.6 461.2,227.1 461.8,226.5 462.4,226.3 463,227.3 463.6,226.5 464.2,227.1 464.8,227.6 465.4,227.2 466,227 466.6,226.3 467.2,227.3 467.8,227.8 468.4,226.8 469,226.1 469.6,226.6 470.2,226.9 470.8,226.3 471.4,226.4 472,225.9 472.6,227.1 473.2,226.7 473.8,226.5 474.4,226.8 475,226.6 475.6,227 476.2,227 476.8,227.4 477.4,224.4 478,226.8 478.6,226.6 479.2,226.6 479.8,227.6 480.4,226.7 481,227 481.6,227.2 482.2,227.1 482.8,226.8 483.4,229 484,224.8 484.6,226.8 485.2,227.8 485.8,228 486.4,226.8 487,227.2 487.6,226.4 488.2,227.5 488.8,227.4 489.4,227.2 490,226.9 490.6,226.2 491.2,227.3 491.8,226.1 492.4,227.2 493,226.5 493.6,226.1 494.2,226.6 494.8,227.8 495.4,226.8 496,227 496.6,228.3 497.2,225.8 497.8,226.3 498.4,227.3 499,226.1 499.6,226 500.2,226.5 500.8,227.6 501.4,226.3 502,227.8 502.6,224.8 503.2,226.8 503.8,226.9 504.4,226.3 505,228.3 505.6,227.4 506.2,226.6 506.8,227.1 507.4,226.6 508,226.9 508.6,227.3 509.2,226.7 509.8,227.3 510.4,226.7 511,226.1 511.6,227.4 512.2,227.4 512.8,227 513.4,225.9 514,227.1 514.6,226.2 515.2,226.7 515.8,226.9 516.4,229.1 517,227.1 517.6,225.6 518.2,227.6 518.8,227.4 519.4,227.2 520,225.9 520.6,226.9 521.2,226.9 521.8,227.1 522.4,227.9 523,226.4 523.6,227 524.2,227.7 524.8,227.1 525.4,226.2 526,227.2 526.6,227.6 527.2,227.1 527.8,226.7 528.4,227.4 529,226.7 529.6,227.5 530.2,226.7 530.8,226.6 531.4,226.8 532,227.1 532.6,226.7 533.2,226.3 533.8,226.6 534.4,228.3 535,227.2 535.6,226.7 536.2,227.3 536.8,228.6 537.4,226.6 538,226.7 538.6,226.8 539.2,227.6 539.8,226.7 540.4,226.6 541,226 541.6,225 542.2,226.1 542.8,227.3 543.4,225.4 544,226.2 544.6,226.4 545.2,227.1 545.8,226.3 546.4,225.7 547,226.8 547.6,225.9 548.2,227.1 548.8,226.5 549.4,226.6 550,227.3 550.6,227.3 551.2,226.1 551.8,226.5 552.4,226.6 553,227.3 553.6,227.5 554.2,226.3 554.8,227.7 555.4,226.7 556,226.9 556.6,227.9 557.2,225.6 557.8,226.8 558.4,227.5 559,226.7 559.6,226.6 560.2,225.8 560.8,227.1 561.4,226.3 562,226.3 562.6,227.1 563.2,227.2 563.8,226.6 564.4,227.1 565,227 565.6,226 566.2,227 566.8,228.5 567.4,227.2 568,227.1 568.6,226.3 569.2,226.2 569.8,226.2 570.4,227 571,227.4 571.6,227.3 572.2,226.3 572.8,225.7 573.4,226.3 574,226.8 574.6,225.9 575.2,227.1 575.8,228 576.4,226.7 577,226.8 577.6,226.1 578.2,226.9 578.8,226.9 579.4,227.2 580,227.4 580.6,226.8 581.2,228.7 581.8,226.2 582.4,226.8 583,226.5 583.6,227.1 584.2,225.6 584.8,227.5 585.4,226.4 585.4,358.3 585.4,358 586,357.8 586.6,357.2 587.2,357.3 587.8,357.4 588.4,356.2 589,356.6 589.6,359.5 590.2,357.3 590.8,358 591.4,357.4 592,356.5 592.6,357.9 593.2,357 593.8,357.4 594.4,357.3 595,357.1 595.6,355.9 596.2,356.8 596.8,356.8 597.4,357.8 598,356.5 598.6,356.7 599.2,356.5 599.8,357.4 599.6,363.8 599.8,357.3 600.4,358.1 601,357 601.6,358 602.2,357.7 602.8,357.2 603.4,356.7 604,358.1 604.6,359.2 605.2,355 605.8,357.6 606.4,356.8 607,357.8 607.6,357.5 608.2,357 608.8,358.1 609.4,357.5 610,356.7 610.6,357.5 611.2,357 611.8,357.3 612.4,357.3 613,358.1 613.6,357.8 614.2,358.1 614.8,355.9 615.4,357.7 616,357.1 616.6,357.7 617.2,356.7 617.8,357 618.4,357.2 619,357.3 619.6,358.1 620.2,357.5 620.8,356.3 621.4,356.9 622,357.9 622.6,357 623.2,357 623.8,356.8 624.4,356.7 625,356.3 625.6,356.1 626.2,356.6 626.8,356.8 627.4,355.5 628,355.6 628.6,355.1 629.2,359.3 629.2,368.7 629.4,357.3 629.8,357.3 630.4,356.9 631,357.8 631.6,356.7 632.2,358.4 632.8,356.7 633.4,357.6 634,357 634.6,356.4 635.2,357.3 635.8,357.9 636.4,357.3 637,357.7 637.6,357 638.2,357.2 638.8,356.1 639.4,356.8 640,357.3 640.6,358.3 641.2,356.7 641.8,357.6 642.4,357.2 643,357.7 643.6,358.7 644,357.2 644,246.5 644.7,246.5 644.7,225.8 644.2,227 644.8,226.5 645.4,226.5 646,227 646.6,228.1 647.2,227.6 647.8,226.2 648.4,227.2 649,226.4 649.6,227.3 650.2,226.8 650.8,225.9 651.4,226.1 652,226.5 652.6,225.1 653.2,226.7 653.8,229.2 654.4,226.8 655,227.1 655.6,226.9 656.2,227.1 656.8,226.5 657.4,225.1 658,226.6 658.6,227.1 659.2,227 659.8,226.6 660.4,227 661,227 661.6,227 662.2,226.1 662.8,227.3 663.4,226.7 664,227.4 664.6,227.9 665.2,226.4 665.8,226.6 666.4,227.8 667,226.5 667.6,226.2 668.2,226.6 668.8,228.8 669.4,226.1 670,227.1 670.6,226.5 671.2,226.6 671.8,226.2 672.4,226.6 673,227 673.6,226.7 674.2,226.8 674.8,226.1 675.4,226.4 676,226.3 676.6,226.5 677.2,226.6 677.8,227.2 678.4,226.5 679,226.6 679.6,227.6 680.2,227 680.8,226.1 681.4,226.4 682,226.8 682.6,226.7 683.2,226.9 683.8,226.9 684.4,227.1 685,226.3 685.6,227.3 686.2,226.8 686.8,226.2 687.4,227.5 688,226.2 688.6,226.4 689.2,227.5 689.8,226.9 690.4,227.2 691,226.8 691.6,227.3 692.2,226.7 692.8,227.4 693.4,226.3 694,227.4 694.6,226.6 695.2,226.9 695.8,226.4 696.4,229.2 697,227 697.6,226.1 698.2,227.6 698.8,227.7 699.4,229.3 700,226.3 700.6,226.5 701.2,226.2 701.8,227.6 702.4,227.1 703,226.6 703.6,226.8 704.2,226.4 704.8,227.3 705.4,227.5 706,226.6 706.6,226.5 707.2,227.1 707.8,227.4 708.4,227.1 709,226.8 709.6,226.7 710.2,227 710.8,227.4 711.4,225.4 712,227.2 712.6,226.6 713.2,227.1 713.8,224.8 714.4,227.7 715,227 715.6,226.2 716.2,226.7 716.8,228.4 717.4,225.5 718,227.5 718.6,227.5 719.2,227.2 719.8,228 720.4,226.9 721,228.1 721.6,225 722.2,227.1 722.8,229.5 723.4,226.5 724,226.7 724.6,226 725.2,226.8 725.8,227.4 726.4,225.9 727,226.8 727.6,226.5 728.2,227.3 728.8,226.3 729.4,227 730,226.9 730.6,227.7 731.2,227.4 731.8,226.5 732.4,226.8 733,226.8 733.6,227 734.2,225.7 734.8,227 735.4,226.9 736,227.3 736.6,227.3 737.2,227.5 737.8,227.5 738.4,227 739,227.5 739.6,226.3 740.2,226.8 740.8,226.3 741.4,226.5 742,228.2 742.6,225.9 743.2,226.8 743.8,226.3 744.4,227.1 745,226.4 745.6,227.2 746.2,228 746.8,226.8 747.4,227.7 748,227 748.6,227.2 749.2,226.6 749.8,227.9 750.4,227.2 751,226.8 751.6,227.7 752.2,226.5 752.8,227.1 753.4,227 754,226.6 754.6,226.7 755.2,227.3 755.8,226.7 756.4,226.2 757,227.7 757.6,226.4 758.2,227.4 758.8,226.8 759.4,227.5 760,226.8 760.6,227 761.2,226.7 761.8,226.7 762.4,226.1 763,229.1 763.6,227.2 764.2,225.3 764.8,226.4 765.4,227.2 766,226.3 766.6,226.7 767.2,228 767.8,226.7 768.4,226.3 769,226.2 769.6,226.3 770.2,226.7 770.8,226.5 771.4,227.7 772,225.6 772.6,227.8 773.2,227.1 773.8,227.2 774.4,226.6 775,226.9 775.6,226.5 776.2,227.1 776.8,226.2 777.4,225.8 778,225.5 778.6,226.4 779.2,226 779.8,227 780.4,226.9 781,225.5 781.6,225.9 782.2,228.3 782.8,226 783.4,226.9 784,226.9 784.6,225.8 785.2,226.6 785.8,226.9 786.4,228.4 787,228.3 787.6,227.2 788.2,227.4 788.8,227.3 789.4,226.7 790,227 790.6,227.6 791.2,226.7 791.8,226.8 792.4,228.3 793,226.1 793.6,226.4 794.2,226 794.8,226 795.4,226.6 796,227.5 796.6,227.3 797.2,226.9 797.8,227.3 798.4,226.6 799,226.6 799.6,227 800.2,227 800.8,226.8 801.4,227.3 802,225.8 802.6,227.4 803.2,227.8 803.8,226.7 804.4,227.1 805,227 805.6,227.2 806.2,226.8 806.8,227.3 807.4,226.3 808,226.4 808.6,226.8 809.2,226.1 809.8,226.1 810.4,226.5 811,226.9 811.6,226.7 812.2,227.3 812.8,226.6 813.4,227.7 814,227.1 814.6,226.3 815.2,227.5 815.8,226.7 816.4,226.7 817,228.8 817.6,227.1 818.2,227.4 818.8,226.1 819.4,226.6 820,227.9 820.6,227.1 821.2,228.1 821.8,227.1 822.4,226.6 823,227.1 823.6,227.1 824.2,226.1 824.8,226.2 825.4,227.2 826,226.8 826.6,225.9 827.2,226.6 827.8,227.5 828.4,226.3 829,226.6 829.6,228.2 830.2,226.5 830.8,227.6 831.4,226.1 832,227.7 832.6,225.9 833.2,226.4 833.8,227.8 834.4,226.6 835,226.6 835.6,226.1 836.2,226.5 836.8,225.7 837.4,227.6 838,226 838.6,225.4 839.2,225.1 839.8,226.3 840.4,224.4 841,224.8 841.6,225.1 842.2,226.9 842.1,242.6 842.3,226.8 842.8,227.4 843.4,226.6 844,226.1 844.6,226.9 845.2,227.2 845.8,227.6 846.4,227.1 847,226.1 847.6,226.5 848.2,226.5 848.8,226 849.4,226.8 850,227 850.6,227.2 851.2,227.8 851.8,227.1 852.4,226.2 853,226.7 853.6,227.1 854.2,226.1 854.8,227.4 855.4,226.4 856,227.6 856.6,226.8 856.8,227.2 856.8,358.3 857.2,357.2 857.8,357.8 858.4,357.2 859,357.7 859.6,357.3 860.2,358.1 860.8,357.9 861.4,356.8 862,357.9 862.6,357.6 863.2,357.8 863.8,356.2 864.4,357.4 865,357.2 865.6,358.2 866.2,358.4 866.8,358.1 867.4,357.6 868,356.8 868.6,357.1 869.2,356.3 869.8,357.6 870.4,356.7 871,356.8 871.6,356.8 872.2,358 872.8,358.4 873.4,356.4 874,357.9 874.6,356.9 875.2,356.4 875.8,356.6 876.4,357.6 877,358.1 877.6,356.8 878.2,356 878.8,357.6 879.4,357.3 880,357.5 880.6,355.7 881.2,358 881.8,357 882.4,357.4 883,356.5 883.6,357.1 884.2,357.1 884.8,357.3 885.4,357.4 886,357.1 886.6,357.8 887.2,357.2 887.8,356 888.4,357.3 889,356.4 889.6,356.6 890.2,356.5 890.8,356.7 891.4,357.7 892,356.3 892.6,356.4 893.2,357.1 893.8,356.2 894.4,356.9 895,356.4 895.6,354.9 896.2,356.9 896.8,357.3 897.4,357.9 898,358 898.6,357.5 899.2,358.1 899.8,357.7 900.4,358.4 901,358.4 901.6,356.2 902.2,357.4 902.8,357.1 903.4,356.7 904,357.2 904.6,358.4 905.2,356.7 905.8,357.4 906.4,357.4 907,357 907.6,357 908.2,357.2 908.8,357.3 909.4,358.7 910,357.9 910.6,357.9 911.2,357.3 911.8,357.7 912.4,356.4 913,357.5 913.6,357.3 914.2,356.9 914.8,357.3 915.4,357.3 916,357.3 916.6,357.4 917.2,356.3 917.8,357.5 918.4,356.1 919,357.3 919.6,356.9 920.2,357.5 920.8,357.3 921.4,357.9 922,357.3 922.6,357.4 923.2,356.8 923.8,357 924.4,356.2 925,357.2 925.6,356.6 926.2,357.5 926.8,357.4 927.4,358.1 928,357.6 928.6,357.5 929.2,358.1 929.8,357.4 930.4,358 931,358 931.6,358.2 932.2,357.5 932.8,358.7 933.4,357.4 934,357.8 934.6,356.4 935.2,356.8 935.8,357.2 936.4,354.9 937,356.6 937.6,356.5 938.2,356.8 938.8,357.2 939.4,357.6 940,356.5 940.6,357.3 941.2,357.8 941.8,357 942.4,358 943,357.8 943.6,357.6 944.2,357 944.8,357.3 945.4,357.4 946,357.3 946.6,357.6 947.2,358 947.8,357.1 948.4,357 949,357 949.6,358.4 950.2,357.8 950.8,357.8 951.4,357.7 952,357.2 952.6,357.7 953.2,357.7 953.8,356.7 954.4,357.6 955,357.8 955.6,358 956.2,356.7 956.8,355.7 957.4,357.4 958,357.6 958.6,357.1 959.2,356.8 959.8,359.4 960.4,357.8 961,357.1 961.6,357.2 962.2,356.7 962.8,356.9 963.4,356.8 964,357.7 964.6,358.2 965.2,357.2 965.8,356.4 966.4,356.2 967,357.4 967.6,358 968.2,357.4 968.8,356.9 969.4,356.5 970,357.7 970.6,358.3 971.2,357.3 971.8,356 972.4,357.3 973,357.9 973.6,357.4 974.2,356.5 974.8,357.7 975.4,356.9 976,357.4 976.6,356.6 977.2,357.5 977.8,357.9 978.4,358.1 979,356.5 979.6,356.7 980.2,357.6 980.8,357.1 981.4,356.6 982,358.5 982.6,356.1 983.2,356.9 983.8,358.1 984.4,357.7 985,357 985.6,358.5 986.2,357.6 986.8,357.1 987.4,357.6 988,357.3 988.6,357.8 989.2,357.6 989.8,357.4 990.4,357 991,357.5 991.6,356.7 992.2,357.3 992.8,356 993.4,357.5 994,357.9 994.6,357.3 995.2,357.4 995.8,357.2 996.4,356.9 997,357.7 997.6,357.6 998.2,356.5 998.8,356.4 999.4,358.5 1000,354.9 1000.6,356.8 1001.2,357.2 1001.8,359.8 1002.4,356.6 1003,357.5 1003.6,356.2 1004.2,357.7 1004.8,357.2 1005.4,357.1 1006,357.7 1006.6,358.1 1007.2,358.4 1007.8,357.1 1008.4,357.3 1009,357.8 1009.6,358.1 1010.2,356.9 1010.8,358 1011.4,357.1 1012,357.3 1012.6,357.8 1013.2,357.8 1013.8,357.4 1014.4,357.1 1015,356.9 1015.6,357.6 1016.2,357.1 1016.8,357.2 1017.4,356.6 1018,356.6 1018.6,357.3 1019.2,357.9 1019.8,357.6 1020.4,357.3 1021,357.5 1021.6,357.2 1022.2,357.6 1022.8,358.5 1023.4,357.4 1024,358.8 1024.6,357.5 1025.2,356.8 1025.8,357.2 1026.4,357.1 1027,357.5 1027.6,356.6 1028.2,356.9 1028.8,357.1 1029.4,356.9 1030,357.7 1030.6,357.1 1031.2,357 1031.8,357.6 1032.4,357.4 1033,356.2 1033.6,357.3 1034.2,356.3 1034.8,357.5 1035.4,357.3 1036,357.8 1036.6,357.1 1037.2,356.8 1037.8,357.2 1038.4,357.2 1039,357 1039.6,357 1040.2,357.3 1040.8,357.5 1041.4,357.8 1042,357.7 1042.6,356.9 1043.2,356.8 1043.8,357.2 1044.4,355.4 1045,357.2 1045.6,357.1 1046.2,356.5 1046.8,356.4 1047.4,358.1 1048,356.5 1048.6,356.5 1049.2,356.4 1049.8,356.7 1050.4,356.3 1051,357 1051.6,356.6 1052.2,357.2 1052.8,355.8 1053.4,355.6 1053.6,364.5 1053.8,357.3 1054,358.7 1054.6,357.6 1055.2,358 1055.8,358.3 1056.4,356.9 1057,358 1057.6,357 1058.2,358.3 1058.8,356.7 1059.4,357.5 1060,357 1060.6,357.5 1061.2,356.6 1061.8,357.8 1062.4,357.3 1063,357.7 1063.6,356.5 1064.2,357.3 1064.8,357.8 1065.4,357.7 1066,357.1 1066.6,357.1 1067.2,357.8 1067.8,357.1 1068.4,357.3 1068.5,356.9 1068.5,246.5 1069.2,246.5 1069.2,225.8 1069,227.1 1069.6,227 1070.2,228.1 1070.8,226.8 1071.4,227.9 1072,227.5 1072.6,227.2 1073.2,226.2 1073.8,226.3 1074.4,228.1 1075,227.8 1075.6,227.5 1076.2,226.6 1076.8,227.8 1077.4,226.8 1078,226.4 1078.6,226.8 1079.2,225.7 1079.8,226.7 1080.4,227 1081,226.1 1081.6,227.7 1082.2,226.9 1082.8,227 1083.4,228.7 1084,226.6 1084.6,226.7 1085.2,227.5 1085.8,227.4 1086.4,227.1 1087,226.5 1087.6,229 1088.2,228 1088.8,227.4 1089.4,226.1 1090,227.1 1090.6,228.8 1091.2,226.5 1091.8,227 1092.4,226.9 1093,225.3 1093.6,227.1 1094.2,227.5 1094.8,227.1 1095.4,226.9 1096,225.4 1096.6,227.6 1097.2,226.5 1097.8,227.1 1098.4,226.1 1099,226.5 1099.6,227.2 1100.2,225 1100.8,228.5 1101.4,226.5 1102,226.6 1102.6,227.1 1103.2,227 1103.8,227.1 1104.4,226.2 1105,227.2 1105.6,226.8 1106.2,226.7 1106.8,226.9 1107.4,227.3 1108,226.1 1108.6,227.2 1109.2,226.3 1109.8,226.7 1110.4,226.3 1111,227.4 1111.6,227 1112.2,227.1 1112.8,226.6 1113.4,227 1114,226.5 1114.6,226.9 1115.2,227.5 1115.8,226 1116.4,226.8 1117,226.4 1117.6,226.5 1118.2,226.4 1118.8,227 1119.4,225.9 1120,226.1 1120.6,227.3 1121.2,226 1121.8,226.5 1122.4,225.9 1123,227.4" fill="none" stroke="#f8f200" stroke-width="1.4" stroke-linejoin="round"/>
<rect x="0" y="590.9" width="1156" height="2" fill="#e2e2e2"/>
<g font-family="Liberation Sans, Arial, sans-serif" font-weight="bold" font-size="10.7" text-anchor="end">
<text x="16.6" y="91.8" fill="#f2ee00">10</text>
<text x="16.6" y="144.5" fill="#f2ee00">8</text>
<text x="16.6" y="197.2" fill="#f2ee00">6</text>
<text x="16.6" y="249.9" fill="#f2ee00">4</text>
<text x="16.6" y="302.6" fill="#f2ee00">2</text>
<text x="16.6" y="355.3" fill="#f2ee00">0</text>
<text x="16.6" y="408" fill="#f2ee00">-2</text>
<text x="16.6" y="460.7" fill="#f2ee00">-4</text>
<text x="16.6" y="513.4" fill="#f2ee00">-6</text>
<text x="16.6" y="566.1" fill="#f2ee00">-8</text>
<text x="39.1" y="89" fill="#00e400">35</text>
<text x="39.1" y="141.7" fill="#00e400">30</text>
<text x="39.1" y="194.4" fill="#00e400">25</text>
<text x="39.1" y="247.1" fill="#00e400">20</text>
<text x="39.1" y="299.8" fill="#00e400">15</text>
<text x="39.1" y="352.4" fill="#00e400">10</text>
<text x="39.1" y="405.2" fill="#00e400">5</text>
<text x="39.1" y="457.9" fill="#00e400">0</text>
<text x="39.1" y="510.6" fill="#00e400">-5</text>
<text x="39.1" y="563.2" fill="#00e400">-10</text>
<text x="61.5" y="120" fill="#00e6f4">24</text>
<text x="61.5" y="172.7" fill="#00e6f4">21</text>
<text x="61.5" y="225.4" fill="#00e6f4">18</text>
<text x="61.5" y="278.1" fill="#00e6f4">15</text>
<text x="61.5" y="330.8" fill="#00e6f4">12</text>
<text x="61.5" y="383.5" fill="#00e6f4">9</text>
<text x="61.5" y="436.2" fill="#00e6f4">6</text>
<text x="61.5" y="488.9" fill="#00e6f4">3</text>
<text x="61.5" y="541.6" fill="#00e6f4">0</text>
<clipPath id="cb"><rect x="0" y="64" width="1156" height="527"/></clipPath>
<text x="61.5" y="592.9" fill="#00e6f4" clip-path="url(#cb)">-3</text>
</g>
<g font-family="Liberation Sans, Arial, sans-serif" font-weight="bold" font-size="10.3" text-anchor="middle" fill="#f4f4f4">
<text x="67.2" y="603.9">0</text>
<text x="172.9" y="603.9">16</text>
<text x="278.6" y="603.9">32</text>
<text x="384.3" y="603.9">48</text>
<text x="490" y="603.9">64</text>
<text x="595.7" y="603.9">80</text>
<text x="701.4" y="603.9">96</text>
<text x="807.1" y="603.9">112</text>
<text x="912.8" y="603.9">128</text>
<text x="1018.5" y="603.9">144</text>
<text x="1142" y="603.9" text-anchor="end">160 ms</text>
</g>
<g font-family="Liberation Sans, Arial, sans-serif" font-weight="bold" font-size="10.5" text-anchor="middle" fill="#000">
<path d="M1124 352.5h6" stroke="#f6f600" stroke-width="1"/>
<rect x="1128.8" y="346.2" width="20.2" height="12.6" fill="#f6f600"/>
<text x="1139" y="356.4">1</text>
<path d="M1124 454.5h6" stroke="#00e800" stroke-width="1"/>
<rect x="1128.8" y="448.2" width="20.2" height="12.6" fill="#00e800"/>
<text x="1139" y="458.4">2</text>
<path d="M1124 538.3h6" stroke="#00ecf4" stroke-width="1"/>
<rect x="1128.8" y="532" width="20.2" height="12.6" fill="#00ecf4"/>
<text x="1139" y="542.2">3</text>
</g>
</svg>
<svg class="ctl" style="left:0;top:606px" width="1156" height="40" viewBox="0 606 1156 40"><defs>
<linearGradient id="gw" x1="0" y1="0" x2="0" y2="1"><stop offset="0" stop-color="#ffffff"/><stop offset=".46" stop-color="#f0f0f4"/><stop offset=".5" stop-color="#d6d6e0"/><stop offset=".58" stop-color="#e6e6ee"/><stop offset="1" stop-color="#ffffff"/></linearGradient>
<linearGradient id="gd" x1="0" y1="0" x2="0" y2="1"><stop offset="0" stop-color="#5a5a5c"/><stop offset=".5" stop-color="#262628"/><stop offset=".52" stop-color="#000"/><stop offset=".75" stop-color="#04101c"/><stop offset="1" stop-color="#12283c"/></linearGradient>
<linearGradient id="gy" x1="0" y1="0" x2="0" y2="1"><stop offset="0" stop-color="#d2d2da"/><stop offset=".5" stop-color="#6a6a72"/><stop offset=".52" stop-color="#000"/><stop offset=".8" stop-color="#0a1a30"/><stop offset="1" stop-color="#c8d0dc"/></linearGradient>
<linearGradient id="gg" x1="0" y1="0" x2="1" y2="0"><stop offset="0" stop-color="#1f8c2e"/><stop offset="1" stop-color="#46c256"/></linearGradient>
</defs>
<circle cx="23.2" cy="626.3" r="13.3" fill="url(#gd)" stroke="#1c1c24" stroke-width=".8"/>
<g fill="#8b8b93"><path d="M15.200 623.400h3.600l1.200-1.600h6.400l1.200 1.600h3.600v9.200h-16z"/><path d="M17.300 617.400l1.700 2.400M23.200 616.300v3M29.100 617.400l-1.700 2.400" stroke="#8b8b93" stroke-width="1.100"/></g>
<circle cx="23.200" cy="629.900" r="4.900" fill="#8b8b93"/><circle cx="23.200" cy="629.300" r="3.700" fill="#101014" stroke="#8b8b93" stroke-width=".6"/><path d="M19.600 629.600a3.600 3.600 0 0 0 7.200 0z" fill="#9a9aa2"/>
<circle cx="69.5" cy="626.3" r="13.3" fill="url(#gd)" stroke="#1c1c24" stroke-width=".8"/>
<rect x="62.500" y="619.900" width="14.100" height="14.100" rx=".6" fill="#8d8f99"/><rect x="62.500" y="626.400" width="14.100" height="7.600" fill="#7f838f"/>
<circle cx="115.5" cy="626.5" r="14.5" fill="url(#gw)" stroke="#6f5aa8" stroke-width=".75"/>
<path d="M110 619.100l14.400 7.400-14.400 7.500z" fill="url(#gg)"/>
<circle cx="161.6" cy="626.3" r="13.3" fill="url(#gd)" stroke="#1c1c24" stroke-width=".8"/>
<circle cx="161.600" cy="626.500" r="7.100" fill="#8d919b"/><path d="M154.500 626.500a7.100 7.100 0 0 0 14.200 0z" fill="#7f8490"/>
<circle cx="299.9" cy="626.5" r="14.7" fill="url(#gw)" stroke="#6f5aa8" stroke-width=".75"/>
<path d="M291.100 626.500l9-8.500v2.600l-2.300 5.900 2.300 5.900v2.600zM298.200 626.500l8.800-8.500v17z" fill="#41608f"/>
<circle cx="346.2" cy="626.5" r="14.7" fill="url(#gw)" stroke="#6f5aa8" stroke-width=".75"/>
<path d="M340.600 626.500l9.300-8.500v16.600z" fill="#41608f"/>
<rect x="367.800" y="613.100" width="551" height="3.200" fill="#f4f4f4"/>
<path d="M371.4 623.600v2.800M404.6 623.600v2.800M437.8 623.600v2.800M471.0 623.600v2.800M504.2 623.600v2.800M537.4 623.600v2.800M570.6 623.600v2.800M603.8 623.600v2.800M637.0 623.600v2.800M670.2 623.600v2.800M703.4 623.600v2.800M736.6 623.600v2.800M769.8 623.600v2.800M803.0 623.600v2.800M836.2 623.600v2.800M869.4 623.600v2.800M902.6 623.600v2.800M915 623.600v2.800" stroke="#8c8c8c" stroke-width="1" fill="none"/>
<path d="M484.700 609.100h8.500v9.600l-4.250 4.200-4.250-4.200z" fill="#0a7ad6"/>
<circle cx="940.8" cy="626.5" r="14.7" fill="url(#gw)" stroke="#6f5aa8" stroke-width=".75"/>
<path d="M946.300 626.400l-9.300-8.400v16.800z" fill="#41608f"/>
<circle cx="987.2" cy="626.5" r="14.7" fill="url(#gw)" stroke="#6f5aa8" stroke-width=".75"/>
<path d="M988.500 626.400l-8.400-8.400v16.800zM996.300 626.400l-8.700-8.400v2.600l2.300 5.800-2.300 5.800v2.600z" fill="#41608f"/>
<circle cx="1033.300" cy="626.300" r="13.800" fill="url(#gy)" stroke="#e8c212" stroke-width="1.400"/>
<path d="M1035.600 619.200h5.800v5" fill="none" stroke="#56565e" stroke-width="2"/>
<path d="M1025.800 627v7.200h15.600v-6.400" fill="none" stroke="#f2f4f8" stroke-width="1.500"/>
<path d="M1024.800 618.600h8.400l-2.600 2.600 9.600 9.400-2.800 2.800-9.600-9.400-3 2.800z" fill="#f6f6fa" stroke="#20242c" stroke-width=".7"/>
<circle cx="1125.6" cy="626.5" r="14.8" fill="url(#gw)" stroke="#6f5aa8" stroke-width=".75"/>
<circle cx="1121.800" cy="623.800" r="4.700" fill="#f8f8fc" stroke="#41608f" stroke-width="2"/><path d="M1125.600 627.600l6.600 5.600" stroke="#41608f" stroke-width="3.200" stroke-linecap="round"/>
</svg>
<div class="timecode">00:00:566</div><div class="zoomtxt">x16</div>
<div class="taskbar"><div class="tk-act"></div>
<div class="tk-ul" style="left:110px;width:28.9px"></div>
<div class="tk-ul" style="left:216px;width:28.8px"></div>
<div class="tk-ul" style="left:251.3px;width:29.1px"></div>
<div class="tk-ul" style="left:287px;width:28.9px"></div>
<div class="tk-ul" style="left:319.3px;width:34.7px"></div>
<div class="tk-ul" style="left:133.200px;width:5.700px;background:#8fdde4"></div>
<svg style="left:0;top:0" width="1156" height="29" viewBox="0 646 1156 29">
<path d="M11.200 655.800l5.200-.8v5h-5.200zM17.200 654.900l6.200-.9v6h-6.200zM11.200 660.800h5.200v5l-5.200-.8zM17.200 660.800h6.200v6l-6.200-.9z" fill="#050505"/>
<g fill="none" stroke="#111" stroke-width="1.100"><rect x="48.200" y="656.800" width="6.400" height="6.400"/><path d="M45.600 655.200h2.600M45.600 664.800h2.600M54.600 655.200h2.200M54.600 664.800h2.200M48.200 654.800v2M48.200 663.200v2.400M54.600 654.800v2M54.600 663.200v2.400M57.600 654.800v3.400M57.600 662v3.600"/></g><rect x="56.700" y="659" width="1.800" height="2" fill="#111"/>
<ellipse cx="88.700" cy="658.700" rx="8.600" ry="4.500" transform="rotate(-20 88.700 658.700)" fill="#f3eeee" stroke="#ea6a72" stroke-width=".9"/><path d="M86.800 655.600l4.600 7.200M91.400 655l-2.800 7.400" stroke="#8a8f98" stroke-width=".9"/><circle cx="90.800" cy="665.800" r="1.700" fill="none" stroke="#2584d8" stroke-width="1.300"/><circle cx="94.500" cy="663.600" r="1.700" fill="none" stroke="#2584d8" stroke-width="1.300"/>
<path d="M116.600 654.600q0-.8.800-.8h4.400l1 1.400h8.400q.8 0 .8.800v9.800q0 .8-.8.800h-13.800q-.8 0-.8-.8z" fill="#e8a30c"/><path d="M116.600 656.600h15.400v9.200q0 .8-.8.800h-13.800q-.8 0-.8-.8z" fill="#fcd462"/><path d="M119 661.400h10.600v5.200h-3v-2.800h-4.600v2.800h-3z" fill="#2583e0"/>
<rect x="151.600" y="652.500" width="17" height="16.600" fill="#3c1c0c"/>
<rect x="152.1" y="653.0" width="3.100" height="3" fill="#7a3a10"/>
<rect x="155.3" y="653.0" width="3.100" height="3" fill="#f4e000"/>
<rect x="158.6" y="653.0" width="3.100" height="3" fill="#e03030"/>
<rect x="161.8" y="653.0" width="3.100" height="3" fill="#f08a20"/>
<rect x="165.1" y="653.0" width="3.100" height="3" fill="#7a3a10"/>
<rect x="152.1" y="656.2" width="3.100" height="3" fill="#f4e000"/>
<rect x="155.3" y="656.2" width="3.100" height="3" fill="#e03030"/>
<rect x="158.6" y="656.2" width="3.100" height="3" fill="#f08a20"/>
<rect x="161.8" y="656.2" width="3.100" height="3" fill="#e03030"/>
<rect x="165.1" y="656.2" width="3.100" height="3" fill="#f4e000"/>
<rect x="152.1" y="659.3" width="3.100" height="3" fill="#e03030"/>
<rect x="155.3" y="659.3" width="3.100" height="3" fill="#f08a20"/>
<rect x="158.6" y="659.3" width="3.100" height="3" fill="#7a3a10"/>
<rect x="161.8" y="659.3" width="3.100" height="3" fill="#f08a20"/>
<rect x="165.1" y="659.3" width="3.100" height="3" fill="#e03030"/>
<rect x="152.1" y="662.5" width="3.100" height="3" fill="#f08a20"/>
<rect x="155.3" y="662.5" width="3.100" height="3" fill="#e03030"/>
<rect x="158.6" y="662.5" width="3.100" height="3" fill="#f08a20"/>
<rect x="161.8" y="662.5" width="3.100" height="3" fill="#7a3a10"/>
<rect x="165.1" y="662.5" width="3.100" height="3" fill="#f4e000"/>
<rect x="152.1" y="665.6" width="3.100" height="3" fill="#7a3a10"/>
<rect x="155.3" y="665.6" width="3.100" height="3" fill="#f4e000"/>
<rect x="158.6" y="665.6" width="3.100" height="3" fill="#e03030"/>
<rect x="161.8" y="665.6" width="3.100" height="3" fill="#f4e000"/>
<rect x="165.1" y="665.6" width="3.100" height="3" fill="#7a3a10"/>
<defs><radialGradient id="gsph" cx=".4" cy=".35" r=".7"><stop offset="0" stop-color="#e6e0fa"/><stop offset=".6" stop-color="#a79ad8"/><stop offset="1" stop-color="#5a4c94"/></radialGradient></defs><circle cx="194.900" cy="660.400" r="8.100" fill="url(#gsph)"/><path d="M188.200 661.600q1.600-3 3-.4t2.600-1q1.400-2.600 2.400.2t3.400-1.400M188.600 664.200h12.600" fill="none" stroke="#1e1838" stroke-width="1.500"/>
<circle cx="230.600" cy="660.400" r="8.800" fill="#fff"/><path d="M230.600 660.400l-7.620-4.400a8.800 8.800 0 0 1 15.240 0z" fill="#e33b2e"/><path d="M230.600 660.400l7.620-4.400a8.800 8.800 0 0 1-7.620 13.200z" fill="#fbc116"/><path d="M230.600 660.400v8.800a8.800 8.800 0 0 1-7.620-13.200z" fill="#2da94f"/><path d="M222.980 656a8.800 8.800 0 0 1 15.240 0h-7.620z" fill="#e33b2e"/><circle cx="230.600" cy="660.400" r="4.100" fill="#fff"/><circle cx="230.600" cy="660.400" r="3.200" fill="#3e82f1"/>
<rect x="257" y="651.800" width="17.700" height="17.100" fill="#fff"/><ellipse cx="265.900" cy="660.200" rx="7.600" ry="4.800" fill="#f2e4e4" stroke="#1a1a1a" stroke-width="1.200"/><path d="M260 660.200h11.800" stroke="#c81e28" stroke-width="2.400"/><path d="M260.400 662.600h10.800" stroke="#444" stroke-width=".8"/>
<rect x="293" y="653.800" width="13.600" height="13.400" rx="1" fill="#8cc4ea"/><path d="M306.600 654.400l1.600.6v11.600l-1.600.6z" fill="#5a9fd0"/><rect x="294" y="654.800" width="11.600" height="11.400" fill="#b4daf4"/><circle cx="299.800" cy="660.500" r="4.700" fill="#f28a1c"/><path d="M298.200 657.900l4.400 2.600-4.400 2.600z" fill="#fff"/>
<defs><linearGradient id="gb2" x1="0" y1="0" x2="1" y2="1"><stop offset="0" stop-color="#3c98e6"/><stop offset=".55" stop-color="#1b5cc0"/><stop offset="1" stop-color="#113c96"/></linearGradient></defs><rect x="328" y="651.800" width="17.400" height="17.100" rx="2" fill="url(#gb2)"/><path d="M328.600 660.200l3-2.800 2 3.400 3-5.400 2.400 4 5.800-3.400" fill="none" stroke="#fff" stroke-width="1.700" stroke-linejoin="round"/><path d="M328.600 665.200l3.600-2.200 2.400 2.400 3-3.600 2.200 2.400 5-2.400" fill="none" stroke="#e6f0ff" stroke-width="1.500" stroke-linejoin="round"/>
<path d="M351.900 646v29" stroke="#d4d4d4" stroke-width=".8"/>
<path d="M945.400 664.600a3.300 3.300 0 0 1 .6-6.500 4.600 4.600 0 0 1 8.800-.6 3.700 3.700 0 0 1 2.200 7.100z" fill="#a9c8f0"/><path d="M945.400 664.600a3.300 3.300 0 0 1 .2-6.200q3 1.200 5.400.8t4.200-1.400a3.700 3.700 0 0 1 1.800 6.800z" fill="#8db6ec"/><circle cx="958" cy="653.200" r="1.700" fill="#e02a2a"/>
<path d="M1037 663.200l4.100-4.200 4.100 4.200" fill="none" stroke="#222" stroke-width="1.100"/>
<g fill="none" stroke="#333" stroke-width=".9"><rect x="1054.200" y="657.400" width="6" height="5.600" rx=".8"/><path d="M1060.400 659.400l2.200-1.200v4l-2.200-1.200M1055.200 655.400q3-1.400 6 0M1055.200 665.200q3 1.400 6 0"/></g>
<path d="M1127 654.600h11.400v9h-8.600l-2.800 2.600z" fill="#1a1a1a"/><path d="M1129 657h7.400M1129 659.200h7.400M1129 661.400h5" stroke="#e9e9e9" stroke-width=".7"/><circle cx="1137.800" cy="665.500" r="4.700" fill="#e6e6e6" stroke="#707070" stroke-width=".8"/>
<text x="1137.800" y="668.200" font-family="Liberation Sans, Arial, sans-serif" font-size="7.400" text-anchor="middle" fill="#222">1</text>
<path d="M1153.200 646v29" stroke="#a8a8a8" stroke-width=".8"/>
</svg>
<div class="wx">7°C&nbsp; Cloudy</div><div class="clock">18:10<br>23/11/2022</div>
</div>
</div></body></html>
